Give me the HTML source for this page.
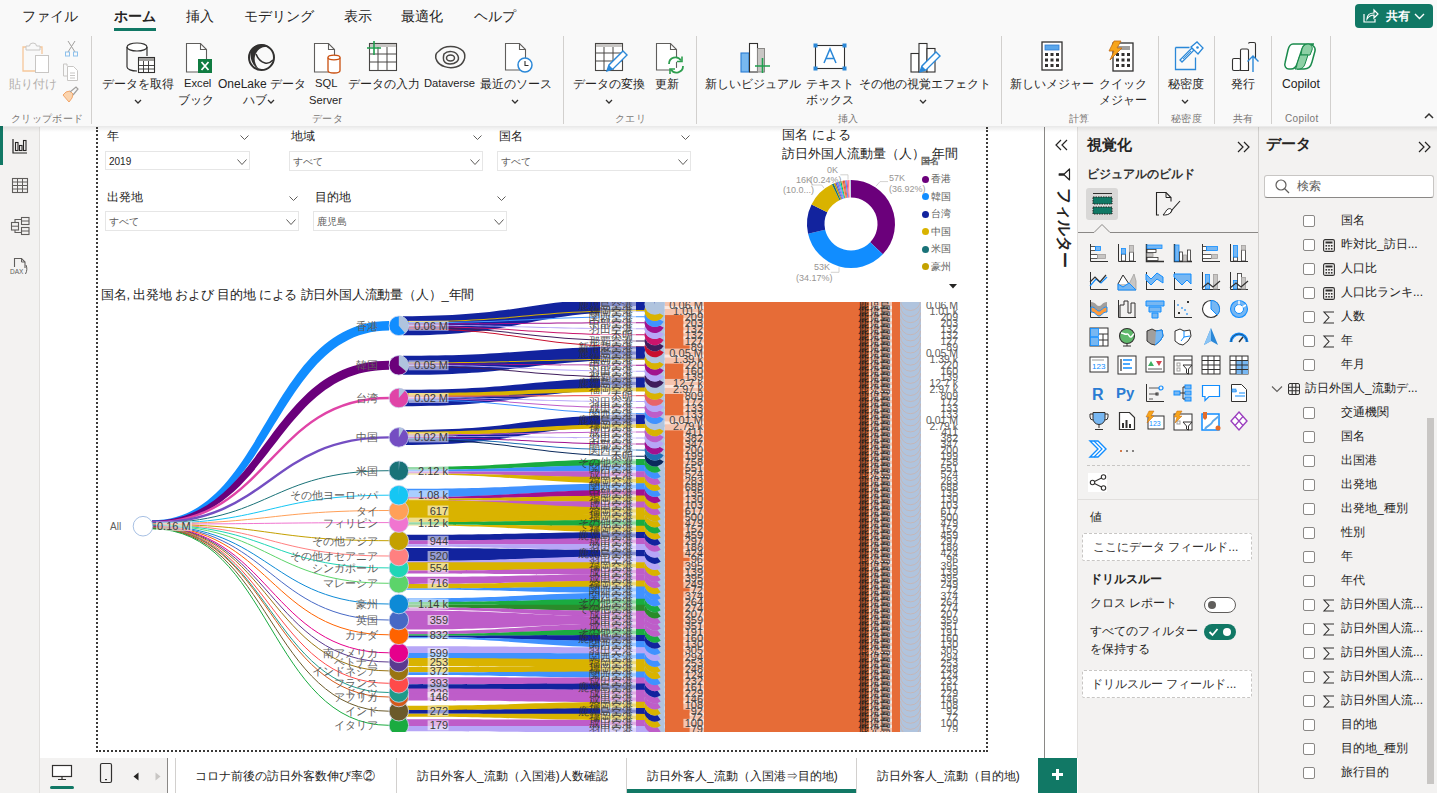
<!DOCTYPE html>
<html><head><meta charset="utf-8">
<style>
*{box-sizing:border-box}
body{margin:0;width:1437px;height:793px;position:relative;overflow:hidden;background:#fff;font-family:"Liberation Sans",sans-serif;color:#252423}
.a{position:absolute}
.t{position:absolute;white-space:nowrap;line-height:1}
.rb{font-size:12px;color:#252423}
.gl{font-size:10px;letter-spacing:.35px;color:#797775}
.sep{position:absolute;width:1px;background:#d2d0ce;top:36px;height:88px}
svg{position:absolute;overflow:visible}
</style></head><body>

<!-- ================= RIBBON ================= -->
<div class="a" style="left:0;top:0;width:1437px;height:126px;background:#f9f9f9"></div>
<div class="t" style="left:22px;top:9px;font-size:14px">ファイル</div>
<div class="t" style="left:114px;top:9px;font-size:14px;font-weight:bold">ホーム</div>
<div class="a" style="left:114px;top:28px;width:42px;height:3px;background:#117865"></div>
<div class="t" style="left:186px;top:9px;font-size:14px">挿入</div>
<div class="t" style="left:244px;top:9px;font-size:14px">モデリング</div>
<div class="t" style="left:344px;top:9px;font-size:14px">表示</div>
<div class="t" style="left:401px;top:9px;font-size:14px">最適化</div>
<div class="t" style="left:474px;top:9px;font-size:14px">ヘルプ</div>

<!-- share button -->
<div class="a" style="left:1355px;top:4px;width:78px;height:24px;background:#117865;border-radius:4px"></div>
<svg style="left:1363px;top:9px" width="16" height="14" viewBox="0 0 16 14"><path d="M1 5v8h11v-3" fill="none" stroke="#fff" stroke-width="1.2"/><path d="M4 10c0-4 3-6 7-6V1l4 4-4 4V6c-3 0-5 1-7 4z" fill="none" stroke="#fff" stroke-width="1.2"/></svg>
<div class="t" style="left:1386px;top:10px;font-size:12.4px;color:#fff;font-weight:bold">共有</div>
<svg style="left:1414px;top:13px" width="11" height="7" viewBox="0 0 11 7"><path d="M1 1l4.5 4.5 4.5-4.5" fill="none" stroke="#fff" stroke-width="1.4"/></svg>

<!-- paste -->
<svg style="left:21px;top:41px" width="30" height="32" viewBox="0 0 30 32">
<path d="M7 6H2v24h15" fill="none" stroke="#f6c79a" stroke-width="1.3"/><path d="M16 6h5v7" fill="none" stroke="#f6c79a" stroke-width="1.3"/>
<path d="M5 9V5h3.5a3.5 3 0 0 1 7 0H19v4z" fill="#f9f9f9" stroke="#c8c6c4" stroke-width="1"/>
<rect x="14.5" y="14.5" width="13" height="17" fill="#fff" stroke="#c8c6c4" stroke-width="1"/></svg>
<svg style="left:65px;top:40px" width="13" height="17" viewBox="0 0 13 17">
<path d="M3 1l7 11M10 1L3 12" stroke="#a19f9d" stroke-width="1" fill="none"/><rect x="0.5" y="12" width="4" height="4" fill="none" stroke="#8ec1ec"/><rect x="8.5" y="12" width="4" height="4" fill="none" stroke="#8ec1ec"/></svg>
<svg style="left:62px;top:63px" width="18" height="18" viewBox="0 0 18 18">
<path d="M5 3V1H1.5v12H5" fill="none" stroke="#c8c6c4"/><path d="M5.5 3.5h6l4 4v10h-10z" fill="#fff" stroke="#c8c6c4"/><path d="M8 10h5M8 12.5h5M8 15h5" stroke="#c8c6c4"/></svg>
<svg style="left:62px;top:86px" width="18" height="18" viewBox="0 0 18 18">
<path d="M1 9l6 7 3-4 1-4-3-3-4 1z" fill="#fbd4ae" stroke="#f1a56a"/><path d="M8 6l6-5 2 2-5 6" fill="none" stroke="#a19f9d" stroke-width="1.2"/></svg>
<div class="t rb" style="left:9px;top:78px;color:#b3b0ad">貼り付け</div>
<div class="t gl" style="left:11px;top:114px">クリップボード</div>
<div class="sep" style="left:91px"></div>

<!-- get data -->
<svg style="left:126px;top:42px" width="30" height="32" viewBox="0 0 30 32">
<ellipse cx="11" cy="5" rx="10" ry="4" fill="#fff" stroke="#323130" stroke-width="1.2"/>
<path d="M1 5v20c0 2.2 4.5 4 10 4" fill="none" stroke="#323130" stroke-width="1.2"/><path d="M21 5v9" fill="none" stroke="#323130" stroke-width="1.2"/>
<rect x="12.5" y="15.5" width="16" height="15" fill="#fff" stroke="#323130" stroke-width="1.1"/><rect x="13" y="16" width="15" height="3" fill="#a19f9d"/>
<path d="M12.5 23.5h16M12.5 27h16M17.5 19v12M22.5 19v12" stroke="#323130" stroke-width="0.9"/></svg>
<div class="t rb" style="left:102px;top:78px">データを取得</div>
<svg style="left:134px;top:99px" width="8" height="6" viewBox="0 0 8 6"><path d="M1 1l3 3 3-3" fill="none" stroke="#323130" stroke-width="1.3"/></svg>

<!-- excel -->
<svg style="left:185px;top:42px" width="30" height="32" viewBox="0 0 30 32">
<path d="M1.5 1.5h14l6 6V30h-20z" fill="#fff" stroke="#605e5c" stroke-width="1.1"/><path d="M15.5 1.5v6h6" fill="none" stroke="#605e5c" stroke-width="1.1"/>
<rect x="13" y="17" width="14" height="14" fill="#107c41"/><path d="M16.5 20l7 8M23.5 20l-7 8" stroke="#fff" stroke-width="1.8"/></svg>
<div class="t rb" style="left:184px;top:78px;font-size:11.2px">Excel</div>
<div class="t rb" style="left:178px;top:94px">ブック</div>

<!-- onelake -->
<svg style="left:247px;top:42px" width="30" height="31" viewBox="0 0 30 31">
<circle cx="14.5" cy="15.5" r="12.5" fill="none" stroke="#323130" stroke-width="2"/>
<path d="M4 8c4-6 13-8 18-3-6-1-12 2-14 9-1 4 0 9 4 13C5 24 2 15 4 8z" fill="#323130"/>
<path d="M9 12c2 5 5 8 9 9 3 1 6-1 8-3" fill="none" stroke="#323130" stroke-width="1.6"/></svg>
<div class="t rb" style="left:218px;top:78px">OneLake データ</div>
<div class="t rb" style="left:243px;top:94px">ハブ</div>
<svg style="left:267px;top:99px" width="8" height="6" viewBox="0 0 8 6"><path d="M1 1l3 3 3-3" fill="none" stroke="#323130" stroke-width="1.3"/></svg>

<!-- sql -->
<svg style="left:313px;top:42px" width="30" height="32" viewBox="0 0 30 32">
<path d="M1.5 1.5h14l6 6V30h-20z" fill="#fff" stroke="#605e5c" stroke-width="1.1"/><path d="M15.5 1.5v6h6" fill="none" stroke="#605e5c" stroke-width="1.1"/>
<path d="M15 15.5v13c0 1.4 2.7 2.5 6 2.5s6-1.1 6-2.5v-13" fill="#fff" stroke="#ca5010" stroke-width="1.3"/><ellipse cx="21" cy="15.5" rx="6" ry="2.3" fill="#fff" stroke="#ca5010" stroke-width="1.3"/></svg>
<div class="t rb" style="left:315px;top:78px;font-size:11.2px">SQL</div>
<div class="t rb" style="left:309px;top:95px;font-size:11.2px">Server</div>

<!-- enter data -->
<svg style="left:366px;top:40px" width="32" height="32" viewBox="0 0 32 32">
<rect x="3.5" y="3.5" width="27" height="27" fill="#fff" stroke="#484644" stroke-width="1.1"/><rect x="4" y="4" width="26" height="3" fill="#c8c6c4"/>
<path d="M3.5 14h27M3.5 22h27M12 7v23M21 7v23" stroke="#484644" stroke-width="1"/>
<path d="M1 8h14M8 1v14" stroke="#1e9e4e" stroke-width="1.6"/></svg>
<div class="t rb" style="left:348px;top:78px">データの入力</div>

<!-- dataverse -->
<svg style="left:434px;top:45px" width="32" height="25" viewBox="0 0 32 25">
<path d="M5 6c5-6 18-6 24 0 4 5 1 14-7 16-8 2-16-1-19-6C0 11 2 8 5 6z" fill="none" stroke="#484644" stroke-width="1.5"/>
<path d="M10 9c4-4 12-3 14 2 2 5-3 8-8 8-5 0-8-3-6-10z" fill="none" stroke="#484644" stroke-width="1.5"/>
<ellipse cx="16.5" cy="13" rx="4" ry="3" fill="none" stroke="#484644" stroke-width="1.5"/></svg>
<div class="t rb" style="left:424px;top:78px;font-size:11.2px">Dataverse</div>

<!-- recent -->
<svg style="left:504px;top:42px" width="30" height="32" viewBox="0 0 30 32">
<path d="M1.5 1.5h14l6 6V28h-20z" fill="#fff" stroke="#605e5c" stroke-width="1.1"/><path d="M15.5 1.5v6h6" fill="none" stroke="#605e5c" stroke-width="1.1"/>
<circle cx="21" cy="23" r="7" fill="#fff" stroke="#2b88d8" stroke-width="1.5"/><path d="M21 19v4.5h3.5" fill="none" stroke="#323130" stroke-width="1.1"/></svg>
<div class="t rb" style="left:480px;top:78px">最近のソース</div>
<svg style="left:511px;top:99px" width="8" height="6" viewBox="0 0 8 6"><path d="M1 1l3 3 3-3" fill="none" stroke="#323130" stroke-width="1.3"/></svg>
<div class="t gl" style="left:312px;top:114px">データ</div>
<div class="sep" style="left:563px"></div>

<!-- transform -->
<svg style="left:594px;top:42px" width="34" height="32" viewBox="0 0 34 32">
<rect x="1.5" y="1.5" width="27" height="27" fill="#fff" stroke="#484644" stroke-width="1.1"/><rect x="2" y="2" width="26" height="3" fill="#c8c6c4"/>
<path d="M1.5 11h27M1.5 19h27M10 5v24M19 5v24" stroke="#484644" stroke-width="1"/>
<path d="M13 29l2-6 14-14 4 4-14 14z" fill="#fff" stroke="#2b88d8" stroke-width="1.4"/><path d="M13 29l2-6 4 4z" fill="#2b88d8"/></svg>
<div class="t rb" style="left:573px;top:78px">データの変換</div>
<svg style="left:605px;top:99px" width="8" height="6" viewBox="0 0 8 6"><path d="M1 1l3 3 3-3" fill="none" stroke="#323130" stroke-width="1.3"/></svg>

<!-- refresh -->
<svg style="left:655px;top:42px" width="30" height="32" viewBox="0 0 30 32">
<path d="M1.5 1.5h14l6 6V28h-20z" fill="#fff" stroke="#605e5c" stroke-width="1.1"/><path d="M15.5 1.5v6h6" fill="none" stroke="#605e5c" stroke-width="1.1"/>
<path d="M14 22a6.5 6.5 0 0 1 12-3.5M28 24a6.5 6.5 0 0 1-12 3.5" fill="#fff" stroke="#2e9e4f" stroke-width="1.8"/>
<path d="M27 14.5v5h-5M15 32v-5h5" fill="none" stroke="#2e9e4f" stroke-width="1.6"/></svg>
<div class="t rb" style="left:655px;top:78px">更新</div>
<div class="t gl" style="left:615px;top:114px">クエリ</div>
<div class="sep" style="left:696px"></div>

<!-- new visual -->
<svg style="left:740px;top:42px" width="32" height="32" viewBox="0 0 32 32">
<rect x="1" y="11" width="8" height="19" fill="#78b8f0" stroke="#2b7cd3" stroke-width="1.1"/>
<rect x="9.5" y="1.5" width="8" height="28.5" fill="#fff" stroke="#323130" stroke-width="1.1"/>
<rect x="17.5" y="6.5" width="7" height="23.5" fill="#c8c6c4" stroke="#8a8886" stroke-width="1"/>
<path d="M15 24h15M22.5 16v15" stroke="#1e9e4e" stroke-width="1.6"/></svg>
<div class="t rb" style="left:705px;top:78px">新しいビジュアル</div>

<!-- text box -->
<svg style="left:813px;top:43px" width="34" height="28" viewBox="0 0 34 28">
<rect x="2.5" y="2.5" width="29" height="23" fill="#fff" stroke="#323130" stroke-width="1.1"/>
<rect x="0.5" y="0.5" width="4" height="4" fill="#2b88d8"/><rect x="29.5" y="0.5" width="4" height="4" fill="#2b88d8"/><rect x="0.5" y="23.5" width="4" height="4" fill="#2b88d8"/><rect x="29.5" y="23.5" width="4" height="4" fill="#2b88d8"/>
<path d="M11 20l6-14 6 14M13 15.5h8" fill="none" stroke="#2b88d8" stroke-width="1.5"/></svg>
<div class="t rb" style="left:806px;top:78px">テキスト</div>
<div class="t rb" style="left:806px;top:94px">ボックス</div>

<!-- other visuals -->
<svg style="left:910px;top:42px" width="32" height="32" viewBox="0 0 32 32">
<rect x="1" y="11.5" width="8" height="18.5" fill="#fff" stroke="#323130" stroke-width="1.1"/>
<rect x="9" y="1.5" width="8" height="28.5" fill="#fff" stroke="#323130" stroke-width="1.1"/>
<rect x="17" y="6.5" width="8" height="23.5" fill="#fff" stroke="#323130" stroke-width="1.1"/>
<path d="M10 30l2-6 14-14 4 4-14 14z" fill="#fff" stroke="#2b88d8" stroke-width="1.4"/><path d="M10 30l2-6 4 4z" fill="#2b88d8"/></svg>
<div class="t rb" style="left:859px;top:78px">その他の視覚エフェクト</div>
<svg style="left:919px;top:99px" width="8" height="6" viewBox="0 0 8 6"><path d="M1 1l3 3 3-3" fill="none" stroke="#323130" stroke-width="1.3"/></svg>
<div class="t gl" style="left:838px;top:114px">挿入</div>
<div class="sep" style="left:1001px"></div>

<!-- new measure -->
<svg style="left:1041px;top:41px" width="22" height="30" viewBox="0 0 22 30">
<rect x="1" y="1" width="20" height="28" fill="#fff" stroke="#323130" stroke-width="1.3"/><rect x="4" y="4" width="14" height="5" fill="#5aa6ea" stroke="#2b7cd3" stroke-width="0.8"/>
<g fill="#323130"><rect x="4" y="12" width="3" height="3"/><rect x="9.5" y="12" width="3" height="3"/><rect x="15" y="12" width="3" height="3"/><rect x="4" y="17.5" width="3" height="3"/><rect x="9.5" y="17.5" width="3" height="3"/><rect x="15" y="17.5" width="3" height="3"/><rect x="4" y="23" width="3" height="3"/><rect x="9.5" y="23" width="3" height="3"/><rect x="15" y="23" width="3" height="3"/></g></svg>
<div class="t rb" style="left:1010px;top:78px">新しいメジャー</div>

<!-- quick measure -->
<svg style="left:1106px;top:40px" width="28" height="32" viewBox="0 0 28 32">
<rect x="7" y="3" width="20" height="28" fill="#fff" stroke="#323130" stroke-width="1.3"/><rect x="10" y="6" width="14" height="4" fill="#a19f9d"/>
<g fill="#323130"><rect x="10" y="13" width="3" height="3"/><rect x="15.5" y="13" width="3" height="3"/><rect x="21" y="13" width="3" height="3"/><rect x="10" y="18.5" width="3" height="3"/><rect x="15.5" y="18.5" width="3" height="3"/><rect x="21" y="18.5" width="3" height="3"/><rect x="10" y="24" width="3" height="3"/><rect x="15.5" y="24" width="3" height="3"/><rect x="21" y="24" width="3" height="3"/></g>
<path d="M8 1h7l-4 7h5L4 20l4-9H3z" fill="#f7a51c" stroke="#c46a10" stroke-width="0.8"/></svg>
<div class="t rb" style="left:1099px;top:78px">クイック</div>
<div class="t rb" style="left:1099px;top:94px">メジャー</div>
<div class="t gl" style="left:1069px;top:114px">計算</div>
<div class="sep" style="left:1158px"></div>

<!-- sensitivity -->
<svg style="left:1174px;top:41px" width="30" height="30" viewBox="0 0 30 30">
<path d="M1.5 6.5h14M1.5 6.5v22h20v-12" fill="none" stroke="#2b88d8" stroke-width="1.3"/>
<path d="M8 21l-2-2 12-12 2 2z" fill="#fff" stroke="#2b88d8" stroke-width="1.3"/><path d="M9 18l8-8" stroke="#2b88d8" stroke-width="0.9"/>
<path d="M17 6l6-5 6 6-5 6z" fill="#fff" stroke="#2b88d8" stroke-width="1.3"/><circle cx="23.5" cy="6.5" r="1.3" fill="#2b88d8"/></svg>
<div class="t rb" style="left:1168px;top:78px">秘密度</div>
<svg style="left:1181px;top:99px" width="8" height="6" viewBox="0 0 8 6"><path d="M1 1l3 3 3-3" fill="none" stroke="#323130" stroke-width="1.3"/></svg>
<div class="t gl" style="left:1171px;top:114px">秘密度</div>
<div class="sep" style="left:1214px"></div>

<!-- publish -->
<svg style="left:1231px;top:42px" width="30" height="31" viewBox="0 0 30 31">
<rect x="1.5" y="16.5" width="8" height="12" rx="1.5" fill="#fff" stroke="#323130" stroke-width="1.1"/>
<path d="M9.5 28.5V8.5a1.5 1.5 0 0 1 1.5-1.5h5a1.5 1.5 0 0 1 1.5 1.5v20z" fill="#fff" stroke="#323130" stroke-width="1.1"/>
<path d="M17.5 1.5a1.5 1.5 0 0 1 1.5-1h4a1.5 1.5 0 0 1 1.5 1.5v15" fill="none" stroke="#323130" stroke-width="1.1"/>
<path d="M22 30V14M16.5 19.5l5.5-5.5 5.5 5.5" fill="none" stroke="#2b88d8" stroke-width="1.4"/></svg>
<div class="t rb" style="left:1231px;top:78px">発行</div>
<div class="t gl" style="left:1233px;top:114px">共有</div>
<div class="sep" style="left:1271px"></div>

<!-- copilot -->
<svg style="left:1284px;top:42px" width="34" height="29" viewBox="0 0 34 29">
<path d="M9 2h15c-3 0-5 2-6 5l-5 15c-1 3-3 5-6 5H5c-3 0-5-3-4-6L4 8c1-4 3-6 5-6z" fill="#fff" stroke="#1a8a4c" stroke-width="1.5"/>
<path d="M24 2c4 0 8 3 7 7l-3 11c-1 4-4 7-8 7h-7c3 0 5-2 6-5l5-15c1-3 3-5 6-5z" fill="#fff" stroke="#1a8a4c" stroke-width="1.5"/>
<path d="M18 7c1-3 3-5 6-5 3 0 5 3 4 6l-2 5h-9z" fill="#8dd0a5" stroke="#1a8a4c" stroke-width="1"/>
<path d="M13 22l3-9h8l-3 9c-1 3-3 5-6 5h-4c1 0 2-3 2-5z" fill="#8dd0a5" stroke="#1a8a4c" stroke-width="1"/></svg>
<div class="t rb" style="left:1282px;top:78px;font-size:12.2px">Copilot</div>
<div class="t gl" style="left:1285px;top:114px">Copilot</div>
<div class="sep" style="left:1330px"></div>
<svg style="left:1424px;top:112px" width="10" height="7" viewBox="0 0 10 7"><path d="M1 6l4-4 4 4" fill="none" stroke="#323130" stroke-width="1.5"/></svg>


<!-- ================= LEFT RAIL ================= -->
<div class="a" style="left:0;top:127px;width:40px;height:666px;background:#f3f2f1;border-right:1px solid #e1dfdd"></div>
<div class="a" style="left:0;top:126px;width:3px;height:39px;background:#117865"></div>
<svg style="left:12px;top:138px" width="16" height="16" viewBox="0 0 16 16">
<path d="M1 1v14h14" fill="none" stroke="#252423" stroke-width="1.2"/><rect x="3.5" y="4.5" width="2.5" height="8" fill="none" stroke="#252423" stroke-width="1.1"/><rect x="7.5" y="7.5" width="2.5" height="5" fill="none" stroke="#252423" stroke-width="1.1"/><rect x="11.5" y="2.5" width="2.5" height="10" fill="none" stroke="#252423" stroke-width="1.1"/></svg>
<svg style="left:11px;top:177px" width="18" height="17" viewBox="0 0 18 17">
<rect x="1.5" y="1.5" width="15" height="14" fill="none" stroke="#605e5c" stroke-width="1.1"/><path d="M1.5 5h15M1.5 8.5h15M1.5 12h15M6.5 1.5v14M11.5 1.5v14" stroke="#605e5c" stroke-width="1"/></svg>
<svg style="left:10px;top:216px" width="20" height="20" viewBox="0 0 20 20">
<rect x="1.5" y="6.5" width="7" height="7.5" fill="none" stroke="#605e5c" stroke-width="1.1"/><path d="M1.5 10.2h7" stroke="#605e5c" stroke-width="1"/>
<rect x="11.5" y="1.5" width="7.5" height="7" fill="none" stroke="#605e5c" stroke-width="1.1"/><path d="M11.5 5h7.5" stroke="#605e5c" stroke-width="1"/>
<rect x="11.5" y="11.5" width="7.5" height="7" fill="none" stroke="#605e5c" stroke-width="1.1"/><path d="M11.5 15h7.5" stroke="#605e5c" stroke-width="1"/>
<path d="M5 6.5V3.5h6.5M5 14v2.5h6.5" fill="none" stroke="#605e5c" stroke-width="1.1"/></svg>
<svg style="left:9px;top:257px" width="20" height="19" viewBox="0 0 20 19">
<path d="M5.5 10V1.5h7l3.5 3.5v6" fill="none" stroke="#605e5c" stroke-width="1.1"/><path d="M12.5 1.5V5H16" fill="none" stroke="#605e5c" stroke-width="1"/><path d="M17 8c1.2 2.5 1.2 6-0.5 9" fill="none" stroke="#605e5c" stroke-width="1"/>
<text x="1" y="17" font-size="6.5" font-family="Liberation Sans" fill="#605e5c">DAX</text></svg>


<!-- ================= CANVAS ================= -->
<div class="a" style="left:40px;top:127px;width:1004px;height:631px;background:#fff"></div>
<div class="a" style="left:96px;top:127px;width:892px;height:625px;border-left:2px dotted #3b3a39;border-right:2px dotted #3b3a39;border-bottom:2px dotted #3b3a39"></div>
<!-- CANVAS_CONTENT -->
<div class="t" style="left:107px;top:130px;font-size:12px;color:#252423">年</div>
<svg style="left:240px;top:135px" width="9" height="5" viewBox="0 0 9 5"><path d="M0.5 0.5L4.5 4.5L8.5 0.5" fill="none" stroke="#605e5c" stroke-width="1"/></svg>
<div class="a" style="left:105px;top:151px;width:145px;height:19px;border:1px solid #e6e6e6;background:#fff"></div>
<div class="t" style="left:109px;top:157px;font-size:10px;color:#252423">2019</div>
<svg style="left:237px;top:159px" width="10" height="6" viewBox="0 0 10 6"><path d="M0.5 0.5L5.0 5.5L9.5 0.5" fill="none" stroke="#605e5c" stroke-width="1"/></svg>
<div class="t" style="left:291px;top:130px;font-size:12px;color:#252423">地域</div>
<svg style="left:473px;top:135px" width="9" height="5" viewBox="0 0 9 5"><path d="M0.5 0.5L4.5 4.5L8.5 0.5" fill="none" stroke="#605e5c" stroke-width="1"/></svg>
<div class="a" style="left:289px;top:151px;width:194px;height:20px;border:1px solid #e6e6e6;background:#fff"></div>
<div class="t" style="left:293px;top:157px;font-size:10px;color:#605e5c">すべて</div>
<svg style="left:470px;top:159px" width="10" height="6" viewBox="0 0 10 6"><path d="M0.5 0.5L5.0 5.5L9.5 0.5" fill="none" stroke="#605e5c" stroke-width="1"/></svg>
<div class="t" style="left:499px;top:130px;font-size:12px;color:#252423">国名</div>
<svg style="left:681px;top:135px" width="9" height="5" viewBox="0 0 9 5"><path d="M0.5 0.5L4.5 4.5L8.5 0.5" fill="none" stroke="#605e5c" stroke-width="1"/></svg>
<div class="a" style="left:497px;top:151px;width:194px;height:20px;border:1px solid #e6e6e6;background:#fff"></div>
<div class="t" style="left:501px;top:157px;font-size:10px;color:#605e5c">すべて</div>
<svg style="left:678px;top:159px" width="10" height="6" viewBox="0 0 10 6"><path d="M0.5 0.5L5.0 5.5L9.5 0.5" fill="none" stroke="#605e5c" stroke-width="1"/></svg>
<div class="t" style="left:107px;top:191px;font-size:12px;color:#252423">出発地</div>
<svg style="left:289px;top:196px" width="9" height="5" viewBox="0 0 9 5"><path d="M0.5 0.5L4.5 4.5L8.5 0.5" fill="none" stroke="#605e5c" stroke-width="1"/></svg>
<div class="a" style="left:105px;top:211px;width:194px;height:20px;border:1px solid #e6e6e6;background:#fff"></div>
<div class="t" style="left:109px;top:217px;font-size:10px;color:#605e5c">すべて</div>
<svg style="left:286px;top:219px" width="10" height="6" viewBox="0 0 10 6"><path d="M0.5 0.5L5.0 5.5L9.5 0.5" fill="none" stroke="#605e5c" stroke-width="1"/></svg>
<div class="t" style="left:315px;top:191px;font-size:12px;color:#252423">目的地</div>
<svg style="left:497px;top:196px" width="9" height="5" viewBox="0 0 9 5"><path d="M0.5 0.5L4.5 4.5L8.5 0.5" fill="none" stroke="#605e5c" stroke-width="1"/></svg>
<div class="a" style="left:313px;top:211px;width:194px;height:20px;border:1px solid #e6e6e6;background:#fff"></div>
<div class="t" style="left:317px;top:217px;font-size:10px;color:#605e5c">鹿児島</div>
<svg style="left:494px;top:219px" width="10" height="6" viewBox="0 0 10 6"><path d="M0.5 0.5L5.0 5.5L9.5 0.5" fill="none" stroke="#605e5c" stroke-width="1"/></svg>
<div class="t" style="left:782px;top:128px;font-size:13px;color:#252423">国名 による</div>
<div class="t" style="left:782px;top:147px;font-size:13px;color:#252423">訪日外国人流動量（人）_年間</div>
<div class="t" style="left:921px;top:157px;font-size:9px;font-weight:bold;color:#605e5c">国名</div>
<div class="a" style="left:922px;top:175.8px;width:7px;height:7px;border-radius:50%;background:#6b007b"></div>
<div class="t" style="left:931px;top:174.3px;font-size:10px;color:#605e5c">香港</div>
<div class="a" style="left:922px;top:193.3px;width:7px;height:7px;border-radius:50%;background:#118dff"></div>
<div class="t" style="left:931px;top:191.8px;font-size:10px;color:#605e5c">韓国</div>
<div class="a" style="left:922px;top:210.8px;width:7px;height:7px;border-radius:50%;background:#12239e"></div>
<div class="t" style="left:931px;top:209.3px;font-size:10px;color:#605e5c">台湾</div>
<div class="a" style="left:922px;top:228.3px;width:7px;height:7px;border-radius:50%;background:#d9b300"></div>
<div class="t" style="left:931px;top:226.8px;font-size:10px;color:#605e5c">中国</div>
<div class="a" style="left:922px;top:245.8px;width:7px;height:7px;border-radius:50%;background:#197278"></div>
<div class="t" style="left:931px;top:244.3px;font-size:10px;color:#605e5c">米国</div>
<div class="a" style="left:922px;top:263.3px;width:7px;height:7px;border-radius:50%;background:#c4a200"></div>
<div class="t" style="left:931px;top:261.8px;font-size:10px;color:#605e5c">豪州</div>
<svg style="left:949px;top:284px" width="8" height="5" viewBox="0 0 8 5"><path d="M0 0h8L4 4.5z" fill="#252423"/></svg>
<svg style="left:807px;top:180.1px" width="88" height="88" viewBox="0 0 88 88"><path d="M44.00 0.00A44 44 0 0 1 75.84 74.37L63.18 62.29A26.5 26.5 0 0 0 44.00 17.50z" fill="#6b007b"/><path d="M75.84 74.37A44 44 0 0 1 1.07 53.65L18.15 49.81A26.5 26.5 0 0 0 63.18 62.29z" fill="#118dff"/><path d="M1.07 53.65A44 44 0 0 1 4.57 24.47L20.25 32.24A26.5 26.5 0 0 0 18.15 49.81z" fill="#12239e"/><path d="M4.57 24.47A44 44 0 0 1 24.89 4.37L32.49 20.13A26.5 26.5 0 0 0 20.25 32.24z" fill="#d9b300"/><path d="M24.89 4.37A44 44 0 0 1 26.72 3.54L33.59 19.63A26.5 26.5 0 0 0 32.49 20.13z" fill="#197278"/><path d="M26.72 3.54A44 44 0 0 1 28.29 2.90L34.54 19.25A26.5 26.5 0 0 0 33.59 19.63z" fill="#c4a200"/><path d="M28.29 2.90A44 44 0 0 1 29.53 2.45L35.28 18.98A26.5 26.5 0 0 0 34.54 19.25z" fill="#744ec2"/><path d="M29.53 2.45A44 44 0 0 1 30.84 2.01L36.08 18.71A26.5 26.5 0 0 0 35.28 18.98z" fill="#4092ff"/><path d="M30.84 2.01A44 44 0 0 1 31.95 1.68L36.75 18.51A26.5 26.5 0 0 0 36.08 18.71z" fill="#be5dc9"/><path d="M31.95 1.68A44 44 0 0 1 33.22 1.34L37.51 18.31A26.5 26.5 0 0 0 36.75 18.51z" fill="#15c6f4"/><path d="M33.22 1.34A44 44 0 0 1 34.35 1.07L38.19 18.15A26.5 26.5 0 0 0 37.51 18.31z" fill="#1aab40"/><path d="M34.35 1.07A44 44 0 0 1 35.71 0.79L39.01 17.97A26.5 26.5 0 0 0 38.19 18.15z" fill="#ffa058"/><path d="M35.71 0.79A44 44 0 0 1 36.77 0.60L39.65 17.86A26.5 26.5 0 0 0 39.01 17.97z" fill="#d64550"/><path d="M36.77 0.60A44 44 0 0 1 38.15 0.39L40.48 17.74A26.5 26.5 0 0 0 39.65 17.86z" fill="#e66c37"/><path d="M38.15 0.39A44 44 0 0 1 39.38 0.24L41.21 17.65A26.5 26.5 0 0 0 40.48 17.74z" fill="#4092ff"/><path d="M39.38 0.24A44 44 0 0 1 40.53 0.14L41.91 17.58A26.5 26.5 0 0 0 41.21 17.65z" fill="#e044a7"/><path d="M40.53 0.14A44 44 0 0 1 41.92 0.05L42.74 17.53A26.5 26.5 0 0 0 41.91 17.58z" fill="#ff8080"/><path d="M41.92 0.05A44 44 0 0 1 43.07 0.01L43.44 17.51A26.5 26.5 0 0 0 42.74 17.53z" fill="#ffc0cb"/><path d="M43.07 0.01A44 44 0 0 1 44.00 0.00L44.00 17.50A26.5 26.5 0 0 0 43.44 17.51z" fill="#b0c4de"/></svg>
<div class="t" style="left:889px;top:174px;font-size:9px;color:#979593">57K</div>
<div class="t" style="left:889px;top:185px;font-size:9px;color:#979593">(36.92%)</div>
<div class="t" style="left:827px;top:166px;font-size:9px;color:#979593">0K</div>
<div class="t" style="left:810px;top:176px;font-size:9px;color:#979593">(0.24%)</div>
<div class="t" style="left:796px;top:176px;font-size:9px;color:#979593">16K</div>
<div class="t" style="left:783px;top:186px;font-size:9px;color:#979593">(10.0...)</div>
<div class="t" style="left:814px;top:263px;font-size:9px;color:#979593">53K</div>
<div class="t" style="left:796px;top:274px;font-size:9px;color:#979593">(34.17%)</div>
<svg style="left:780px;top:160px" width="120" height="120" viewBox="780 160 120 120"><path d="M876 186.2L880 181.6H888M840.3 174.8H848V179.7M811 185H821.8L824 188.2M830.8 272.3H839V267.4" fill="none" stroke="#c8c6c4" stroke-width="0.8"/></svg>
<div class="t" style="left:101px;top:288px;font-size:13px;letter-spacing:-0.2px;color:#252423">国名, 出発地 および 目的地 による 訪日外国人流動量（人）_年間</div>
<svg style="left:100px;top:302px;overflow:hidden" width="885" height="430" viewBox="100 302 885 430" font-family="Liberation Sans, sans-serif"><path d="M152 520.30C266.2 520.30 266.2 321.05 389 321.05L389 330.55C273.8 330.55 273.8 523.30 152 523.30z" fill="#118dff"/>
<path d="M152 520.62C266.4 520.62 266.4 360.80 389 360.80L389 369.80C273.6 369.80 273.6 523.62 152 523.62z" fill="#6b007b"/>
<path d="M152 522.44C270 522.44 270 398.00 389 398.00" fill="none" stroke="#e044a7" stroke-width="2.4"/>
<path d="M152 522.75C270 522.75 270 437.40 389 437.40" fill="none" stroke="#744ec2" stroke-width="2.4"/>
<path d="M152 523.07C270 523.07 270 470.70 389 470.70" fill="none" stroke="#197278" stroke-width="1.0"/>
<path d="M152 523.39C270 523.39 270 495.20 389 495.20" fill="none" stroke="#15c6f4" stroke-width="1.0"/>
<path d="M152 523.71C270 523.71 270 510.50 389 510.50" fill="none" stroke="#ffa058" stroke-width="1.0"/>
<path d="M152 524.03C270 524.03 270 522.60 389 522.60" fill="none" stroke="#f075d0" stroke-width="1.0"/>
<path d="M152 524.35C270 524.35 270 540.70 389 540.70" fill="none" stroke="#c4a000" stroke-width="1.0"/>
<path d="M152 524.66C270 524.66 270 556.00 389 556.00" fill="none" stroke="#ff8080" stroke-width="1.0"/>
<path d="M152 524.98C270 524.98 270 567.90 389 567.90" fill="none" stroke="#1fd6b6" stroke-width="1.0"/>
<path d="M152 525.30C270 525.30 270 583.30 389 583.30" fill="none" stroke="#5cd46a" stroke-width="1.0"/>
<path d="M152 525.62C270 525.62 270 604.00 389 604.00" fill="none" stroke="#0d8ad6" stroke-width="1.0"/>
<path d="M152 525.94C270 525.94 270 620.00 389 620.00" fill="none" stroke="#4668c5" stroke-width="1.0"/>
<path d="M152 526.25C270 526.25 270 634.80 389 634.80" fill="none" stroke="#ff6300" stroke-width="1.0"/>
<path d="M152 526.57C270 526.57 270 652.80 389 652.80" fill="none" stroke="#e6008c" stroke-width="1.0"/>
<path d="M152 526.89C270 526.89 270 662.00 389 662.00" fill="none" stroke="#5b3a8f" stroke-width="1.0"/>
<path d="M152 527.21C270 527.21 270 670.90 389 670.90" fill="none" stroke="#9a7412" stroke-width="1.0"/>
<path d="M152 527.53C270 527.53 270 683.30 389 683.30" fill="none" stroke="#ff4a4a" stroke-width="1.0"/>
<path d="M152 527.85C270 527.85 270 692.50 389 692.50" fill="none" stroke="#1f9a8a" stroke-width="1.0"/>
<path d="M152 528.16C270 528.16 270 697.00 389 697.00" fill="none" stroke="#d4591a" stroke-width="1.0"/>
<path d="M152 528.48C270 528.48 270 711.20 389 711.20" fill="none" stroke="#6b5a2a" stroke-width="1.0"/>
<path d="M152 528.80C270 528.80 270 725.30 389 725.30" fill="none" stroke="#1aab40" stroke-width="1.0"/>
<path d="M403.0 316.30C525.5 316.30 525.5 297.85 648.0 297.85L648.0 311.15C525.5 311.15 525.5 335.30 403.0 335.30z" fill="#12239e"/>
<path d="M403.0 321.10C525.5 321.10 525.5 310.07 648.0 310.07L648.0 311.07C525.5 311.07 525.5 322.10 403.0 322.10z" fill="#d9b300"/>
<path d="M403.0 322.30C525.5 322.30 525.5 316.14 648.0 316.14L648.0 317.14C525.5 317.14 525.5 323.30 403.0 323.30z" fill="#4092ff"/>
<path d="M403.0 323.50C525.5 323.50 525.5 322.21 648.0 322.21L648.0 323.21C525.5 323.21 525.5 324.50 403.0 324.50z" fill="#a1118f"/>
<path d="M403.0 324.70C525.5 324.70 525.5 328.28 648.0 328.28L648.0 329.28C525.5 329.28 525.5 325.70 403.0 325.70z" fill="#b7a6f7"/>
<path d="M403.0 325.90C525.5 325.90 525.5 334.35 648.0 334.35L648.0 335.35C525.5 335.35 525.5 326.90 403.0 326.90z" fill="#c9146c"/>
<path d="M403.0 327.10C525.5 327.10 525.5 340.42 648.0 340.42L648.0 341.42C525.5 341.42 525.5 328.10 403.0 328.10z" fill="#3f1d5c"/>
<path d="M403.0 328.30C525.5 328.30 525.5 346.49 648.0 346.49L648.0 347.49C525.5 347.49 525.5 329.30 403.0 329.30z" fill="#c8102e"/>
<path d="M403.0 355.80C525.5 355.80 525.5 346.41 648.0 346.41L648.0 359.71C525.5 359.71 525.5 374.80 403.0 374.80z" fill="#12239e"/>
<path d="M403.0 362.40C525.5 362.40 525.5 358.63 648.0 358.63L648.0 359.63C525.5 359.63 525.5 363.40 403.0 363.40z" fill="#d9b300"/>
<path d="M403.0 363.60C525.5 363.60 525.5 364.70 648.0 364.70L648.0 365.70C525.5 365.70 525.5 364.60 403.0 364.60z" fill="#a1118f"/>
<path d="M403.0 364.80C525.5 364.80 525.5 370.77 648.0 370.77L648.0 371.77C525.5 371.77 525.5 365.80 403.0 365.80z" fill="#b7a6f7"/>
<path d="M403.0 366.00C525.5 366.00 525.5 376.84 648.0 376.84L648.0 377.84C525.5 377.84 525.5 367.00 403.0 367.00z" fill="#3f1d5c"/>
<path d="M403.0 389.75C525.5 389.75 525.5 377.63 648.0 377.63L648.0 389.18C525.5 389.18 525.5 406.25 403.0 406.25z" fill="#12239e"/>
<path d="M403.0 393.00C525.5 393.00 525.5 387.48 648.0 387.48L648.0 391.48C525.5 391.48 525.5 397.00 403.0 397.00z" fill="#d9b300"/>
<path d="M403.0 395.61C525.5 395.61 525.5 394.96 648.0 394.96L648.0 396.14C525.5 396.14 525.5 396.79 403.0 396.79z" fill="#e8636a"/>
<path d="M403.0 396.90C525.5 396.90 525.5 401.12 648.0 401.12L648.0 402.12C525.5 402.12 525.5 397.90 403.0 397.90z" fill="#b7a6f7"/>
<path d="M403.0 398.10C525.5 398.10 525.5 407.19 648.0 407.19L648.0 408.19C525.5 408.19 525.5 399.10 403.0 399.10z" fill="#be5dc9"/>
<path d="M403.0 399.30C525.5 399.30 525.5 413.26 648.0 413.26L648.0 414.26C525.5 414.26 525.5 400.30 403.0 400.30z" fill="#4092ff"/>
<path d="M403.0 429.90C525.5 429.90 525.5 414.58 648.0 414.58L648.0 425.08C525.5 425.08 525.5 444.90 403.0 444.90z" fill="#12239e"/>
<path d="M403.0 431.80C525.5 431.80 525.5 423.90 648.0 423.90L648.0 427.90C525.5 427.90 525.5 435.80 403.0 435.80z" fill="#d9b300"/>
<path d="M403.0 434.50C525.5 434.50 525.5 431.47 648.0 431.47L648.0 432.47C525.5 432.47 525.5 435.50 403.0 435.50z" fill="#be5dc9"/>
<path d="M403.0 435.70C525.5 435.70 525.5 437.54 648.0 437.54L648.0 438.54C525.5 438.54 525.5 436.70 403.0 436.70z" fill="#b7a6f7"/>
<path d="M403.0 436.90C525.5 436.90 525.5 443.61 648.0 443.61L648.0 444.61C525.5 444.61 525.5 437.90 403.0 437.90z" fill="#a1118f"/>
<path d="M403.0 438.10C525.5 438.10 525.5 449.68 648.0 449.68L648.0 450.68C525.5 450.68 525.5 439.10 403.0 439.10z" fill="#1f6fb4"/>
<path d="M403.0 439.30C525.5 439.30 525.5 455.75 648.0 455.75L648.0 456.75C525.5 456.75 525.5 440.30 403.0 440.30z" fill="#0b2a5c"/>
<path d="M403.0 466.95C525.5 466.95 525.5 459.03 648.0 459.03L648.0 465.61C525.5 465.61 525.5 469.64 403.0 469.64z" fill="#1aab40"/>
<path d="M403.0 469.64C525.5 469.64 525.5 465.10 648.0 465.10L648.0 471.68C525.5 471.68 525.5 471.59 403.0 471.59z" fill="#4092ff"/>
<path d="M403.0 471.59C525.5 471.59 525.5 471.17 648.0 471.17L648.0 477.75C525.5 477.75 525.5 473.45 403.0 473.45z" fill="#be5dc9"/>
<path d="M403.0 473.45C525.5 473.45 525.5 477.24 648.0 477.24L648.0 483.81C525.5 483.81 525.5 474.45 403.0 474.45z" fill="#d9b300"/>
<path d="M403.0 488.85C525.5 488.85 525.5 483.31 648.0 483.31L648.0 489.89C525.5 489.89 525.5 497.12 403.0 497.12z" fill="#4092ff"/>
<path d="M403.0 497.12C525.5 497.12 525.5 489.38 648.0 489.38L648.0 495.95C525.5 495.95 525.5 498.75 403.0 498.75z" fill="#a1118f"/>
<path d="M403.0 498.75C525.5 498.75 525.5 495.45 648.0 495.45L648.0 502.03C525.5 502.03 525.5 500.31 403.0 500.31z" fill="#d9b300"/>
<path d="M403.0 500.31C525.5 500.31 525.5 501.52 648.0 501.52L648.0 508.09C525.5 508.09 525.5 501.55 403.0 501.55z" fill="#be5dc9"/>
<path d="M403.0 500.00C525.5 500.00 525.5 507.59 648.0 507.59L648.0 514.16C525.5 514.16 525.5 521.00 403.0 521.00z" fill="#d9b300"/>
<path d="M403.0 519.60C525.5 519.60 525.5 513.67 648.0 513.67L648.0 520.24C525.5 520.24 525.5 522.17 403.0 522.17z" fill="#d9b300"/>
<path d="M403.0 522.17C525.5 522.17 525.5 519.74 648.0 519.74L648.0 526.30C525.5 526.30 525.5 524.63 403.0 524.63z" fill="#1aab40"/>
<path d="M403.0 524.63C525.5 524.63 525.5 525.80 648.0 525.80L648.0 532.37C525.5 532.37 525.5 525.60 403.0 525.60z" fill="#d9b300"/>
<path d="M403.0 534.70C525.5 534.70 525.5 531.88 648.0 531.88L648.0 538.44C525.5 538.44 525.5 540.53 403.0 540.53z" fill="#12239e"/>
<path d="M403.0 540.53C525.5 540.53 525.5 537.95 648.0 537.95L648.0 544.51C525.5 544.51 525.5 544.31 403.0 544.31z" fill="#be5dc9"/>
<path d="M403.0 544.31C525.5 544.31 525.5 544.01 648.0 544.01L648.0 550.58C525.5 550.58 525.5 546.70 403.0 546.70z" fill="#b7a6f7"/>
<path d="M403.0 548.00C525.5 548.00 525.5 550.09 648.0 550.09L648.0 556.65C525.5 556.65 525.5 561.05 403.0 561.05z" fill="#12239e"/>
<path d="M403.0 561.05C525.5 561.05 525.5 556.15 648.0 556.15L648.0 562.72C525.5 562.72 525.5 564.00 403.0 564.00z" fill="#b7a6f7"/>
<path d="M403.0 562.40C525.5 562.40 525.5 562.23 648.0 562.23L648.0 568.79C525.5 568.79 525.5 570.54 403.0 570.54z" fill="#d9b300"/>
<path d="M403.0 570.54C525.5 570.54 525.5 568.29 648.0 568.29L648.0 574.86C525.5 574.86 525.5 573.40 403.0 573.40z" fill="#be5dc9"/>
<path d="M403.0 576.80C525.5 576.80 525.5 574.37 648.0 574.37L648.0 580.93C525.5 580.93 525.5 583.97 403.0 583.97z" fill="#be5dc9"/>
<path d="M403.0 583.97C525.5 583.97 525.5 580.44 648.0 580.44L648.0 587.00C525.5 587.00 525.5 588.49 403.0 588.49z" fill="#d9b300"/>
<path d="M403.0 588.49C525.5 588.49 525.5 586.50 648.0 586.50L648.0 593.07C525.5 593.07 525.5 589.80 403.0 589.80z" fill="#4092ff"/>
<path d="M403.0 598.50C525.5 598.50 525.5 592.57 648.0 592.57L648.0 599.14C525.5 599.14 525.5 602.18 403.0 602.18z" fill="#4092ff"/>
<path d="M403.0 602.18C525.5 602.18 525.5 598.64 648.0 598.64L648.0 605.21C525.5 605.21 525.5 604.77 403.0 604.77z" fill="#1aab40"/>
<path d="M403.0 604.77C525.5 604.77 525.5 604.72 648.0 604.72L648.0 611.28C525.5 611.28 525.5 607.47 403.0 607.47z" fill="#2a8c2a"/>
<path d="M403.0 607.47C525.5 607.47 525.5 610.78 648.0 610.78L648.0 617.35C525.5 617.35 525.5 609.50 403.0 609.50z" fill="#be5dc9"/>
<path d="M403.0 610.50C525.5 610.50 525.5 616.86 648.0 616.86L648.0 623.42C525.5 623.42 525.5 629.50 403.0 629.50z" fill="#be5dc9"/>
<path d="M403.0 631.30C525.5 631.30 525.5 622.93 648.0 622.93L648.0 629.50C525.5 629.50 525.5 634.25 403.0 634.25z" fill="#be5dc9"/>
<path d="M403.0 634.25C525.5 634.25 525.5 629.00 648.0 629.00L648.0 635.56C525.5 635.56 525.5 635.86 403.0 635.86z" fill="#1aab40"/>
<path d="M403.0 635.86C525.5 635.86 525.5 635.06 648.0 635.06L648.0 641.63C525.5 641.63 525.5 637.21 403.0 637.21z" fill="#12239e"/>
<path d="M403.0 637.21C525.5 637.21 525.5 641.13 648.0 641.13L648.0 647.70C525.5 647.70 525.5 638.30 403.0 638.30z" fill="#4092ff"/>
<path d="M403.0 646.30C525.5 646.30 525.5 647.21 648.0 647.21L648.0 653.77C525.5 653.77 525.5 652.92 403.0 652.92z" fill="#b7a6f7"/>
<path d="M403.0 652.92C525.5 652.92 525.5 653.27 648.0 653.27L648.0 659.84C525.5 659.84 525.5 659.30 403.0 659.30z" fill="#4092ff"/>
<path d="M403.0 658.00C525.5 658.00 525.5 659.34 648.0 659.34L648.0 665.91C525.5 665.91 525.5 666.00 403.0 666.00z" fill="#d9b300"/>
<path d="M403.0 666.90C525.5 666.90 525.5 665.42 648.0 665.42L648.0 671.99C525.5 671.99 525.5 672.23 403.0 672.23z" fill="#d9b300"/>
<path d="M403.0 672.23C525.5 672.23 525.5 671.49 648.0 671.49L648.0 678.05C525.5 678.05 525.5 674.90 403.0 674.90z" fill="#4092ff"/>
<path d="M403.0 677.30C525.5 677.30 525.5 677.55 648.0 677.55L648.0 684.12C525.5 684.12 525.5 684.38 403.0 684.38z" fill="#be5dc9"/>
<path d="M403.0 684.38C525.5 684.38 525.5 683.62 648.0 683.62L648.0 690.19C525.5 690.19 525.5 689.30 403.0 689.30z" fill="#12239e"/>
<path d="M403.0 688.50C525.5 688.50 525.5 689.70 648.0 689.70L648.0 696.26C525.5 696.26 525.5 696.50 403.0 696.50z" fill="#be5dc9"/>
<path d="M403.0 693.50C525.5 693.50 525.5 695.76 648.0 695.76L648.0 702.33C525.5 702.33 525.5 700.50 403.0 700.50z" fill="#be5dc9"/>
<path d="M403.0 705.70C525.5 705.70 525.5 701.83 648.0 701.83L648.0 708.40C525.5 708.40 525.5 710.07 403.0 710.07z" fill="#d9b300"/>
<path d="M403.0 710.07C525.5 710.07 525.5 707.90 648.0 707.90L648.0 714.47C525.5 714.47 525.5 713.79 403.0 713.79z" fill="#12239e"/>
<path d="M403.0 713.79C525.5 713.79 525.5 713.98 648.0 713.98L648.0 720.54C525.5 720.54 525.5 716.70 403.0 716.70z" fill="#d9b300"/>
<path d="M403.0 719.30C525.5 719.30 525.5 720.04 648.0 720.04L648.0 726.61C525.5 726.61 525.5 726.00 403.0 726.00z" fill="#be5dc9"/>
<path d="M403.0 726.00C525.5 726.00 525.5 726.12 648.0 726.12L648.0 732.68C525.5 732.68 525.5 731.30 403.0 731.30z" fill="#b7a6f7"/>
<rect x="600" y="300.00" width="36" height="9" fill="#fff" fill-opacity="0.5"/>
<rect x="600" y="306.07" width="36" height="9" fill="#fff" fill-opacity="0.5"/>
<rect x="600" y="312.14" width="36" height="9" fill="#fff" fill-opacity="0.5"/>
<rect x="600" y="318.21" width="36" height="9" fill="#fff" fill-opacity="0.5"/>
<rect x="600" y="324.28" width="36" height="9" fill="#fff" fill-opacity="0.5"/>
<rect x="600" y="330.35" width="36" height="9" fill="#fff" fill-opacity="0.5"/>
<rect x="600" y="336.42" width="36" height="9" fill="#fff" fill-opacity="0.5"/>
<rect x="600" y="342.49" width="36" height="9" fill="#fff" fill-opacity="0.5"/>
<rect x="600" y="348.56" width="36" height="9" fill="#fff" fill-opacity="0.5"/>
<rect x="600" y="354.63" width="36" height="9" fill="#fff" fill-opacity="0.5"/>
<rect x="600" y="360.70" width="36" height="9" fill="#fff" fill-opacity="0.5"/>
<rect x="600" y="366.77" width="36" height="9" fill="#fff" fill-opacity="0.5"/>
<rect x="600" y="372.84" width="36" height="9" fill="#fff" fill-opacity="0.5"/>
<rect x="600" y="378.91" width="36" height="9" fill="#fff" fill-opacity="0.5"/>
<rect x="600" y="384.98" width="36" height="9" fill="#fff" fill-opacity="0.5"/>
<rect x="600" y="391.05" width="36" height="9" fill="#fff" fill-opacity="0.5"/>
<rect x="600" y="397.12" width="36" height="9" fill="#fff" fill-opacity="0.5"/>
<rect x="600" y="403.19" width="36" height="9" fill="#fff" fill-opacity="0.5"/>
<rect x="600" y="409.26" width="36" height="9" fill="#fff" fill-opacity="0.5"/>
<rect x="600" y="415.33" width="36" height="9" fill="#fff" fill-opacity="0.5"/>
<rect x="600" y="421.40" width="36" height="9" fill="#fff" fill-opacity="0.5"/>
<rect x="600" y="427.47" width="36" height="9" fill="#fff" fill-opacity="0.5"/>
<rect x="600" y="433.54" width="36" height="9" fill="#fff" fill-opacity="0.5"/>
<rect x="600" y="439.61" width="36" height="9" fill="#fff" fill-opacity="0.5"/>
<rect x="600" y="445.68" width="36" height="9" fill="#fff" fill-opacity="0.5"/>
<rect x="600" y="451.75" width="36" height="9" fill="#fff" fill-opacity="0.5"/>
<rect x="600" y="457.82" width="36" height="9" fill="#fff" fill-opacity="0.5"/>
<rect x="600" y="463.89" width="36" height="9" fill="#fff" fill-opacity="0.5"/>
<rect x="600" y="469.96" width="36" height="9" fill="#fff" fill-opacity="0.5"/>
<rect x="600" y="476.03" width="36" height="9" fill="#fff" fill-opacity="0.5"/>
<rect x="600" y="482.10" width="36" height="9" fill="#fff" fill-opacity="0.5"/>
<rect x="600" y="488.17" width="36" height="9" fill="#fff" fill-opacity="0.5"/>
<rect x="600" y="494.24" width="36" height="9" fill="#fff" fill-opacity="0.5"/>
<rect x="600" y="500.31" width="36" height="9" fill="#fff" fill-opacity="0.5"/>
<rect x="600" y="506.38" width="36" height="9" fill="#fff" fill-opacity="0.5"/>
<rect x="600" y="512.45" width="36" height="9" fill="#fff" fill-opacity="0.5"/>
<rect x="600" y="518.52" width="36" height="9" fill="#fff" fill-opacity="0.5"/>
<rect x="600" y="524.59" width="36" height="9" fill="#fff" fill-opacity="0.5"/>
<rect x="600" y="530.66" width="36" height="9" fill="#fff" fill-opacity="0.5"/>
<rect x="600" y="536.73" width="36" height="9" fill="#fff" fill-opacity="0.5"/>
<rect x="600" y="542.80" width="36" height="9" fill="#fff" fill-opacity="0.5"/>
<rect x="600" y="548.87" width="36" height="9" fill="#fff" fill-opacity="0.5"/>
<rect x="600" y="554.94" width="36" height="9" fill="#fff" fill-opacity="0.5"/>
<rect x="600" y="561.01" width="36" height="9" fill="#fff" fill-opacity="0.5"/>
<rect x="600" y="567.08" width="36" height="9" fill="#fff" fill-opacity="0.5"/>
<rect x="600" y="573.15" width="36" height="9" fill="#fff" fill-opacity="0.5"/>
<rect x="600" y="579.22" width="36" height="9" fill="#fff" fill-opacity="0.5"/>
<rect x="600" y="585.29" width="36" height="9" fill="#fff" fill-opacity="0.5"/>
<rect x="600" y="591.36" width="36" height="9" fill="#fff" fill-opacity="0.5"/>
<rect x="600" y="597.43" width="36" height="9" fill="#fff" fill-opacity="0.5"/>
<rect x="600" y="603.50" width="36" height="9" fill="#fff" fill-opacity="0.5"/>
<rect x="600" y="609.57" width="36" height="9" fill="#fff" fill-opacity="0.5"/>
<rect x="600" y="615.64" width="36" height="9" fill="#fff" fill-opacity="0.5"/>
<rect x="600" y="621.71" width="36" height="9" fill="#fff" fill-opacity="0.5"/>
<rect x="600" y="627.78" width="36" height="9" fill="#fff" fill-opacity="0.5"/>
<rect x="600" y="633.85" width="36" height="9" fill="#fff" fill-opacity="0.5"/>
<rect x="600" y="639.92" width="36" height="9" fill="#fff" fill-opacity="0.5"/>
<rect x="600" y="645.99" width="36" height="9" fill="#fff" fill-opacity="0.5"/>
<rect x="600" y="652.06" width="36" height="9" fill="#fff" fill-opacity="0.5"/>
<rect x="600" y="658.13" width="36" height="9" fill="#fff" fill-opacity="0.5"/>
<rect x="600" y="664.20" width="36" height="9" fill="#fff" fill-opacity="0.5"/>
<rect x="600" y="670.27" width="36" height="9" fill="#fff" fill-opacity="0.5"/>
<rect x="600" y="676.34" width="36" height="9" fill="#fff" fill-opacity="0.5"/>
<rect x="600" y="682.41" width="36" height="9" fill="#fff" fill-opacity="0.5"/>
<rect x="600" y="688.48" width="36" height="9" fill="#fff" fill-opacity="0.5"/>
<rect x="600" y="694.55" width="36" height="9" fill="#fff" fill-opacity="0.5"/>
<rect x="600" y="700.62" width="36" height="9" fill="#fff" fill-opacity="0.5"/>
<rect x="600" y="706.69" width="36" height="9" fill="#fff" fill-opacity="0.5"/>
<rect x="600" y="712.76" width="36" height="9" fill="#fff" fill-opacity="0.5"/>
<rect x="600" y="718.83" width="36" height="9" fill="#fff" fill-opacity="0.5"/>
<rect x="600" y="724.90" width="36" height="9" fill="#fff" fill-opacity="0.5"/>
<text x="633" y="308.50" text-anchor="end" font-size="11" fill="#323130" fill-opacity="0.85">鹿児島空港</text>
<text x="633" y="314.57" text-anchor="end" font-size="11" fill="#323130" fill-opacity="0.85">福岡空港</text>
<text x="633" y="320.64" text-anchor="end" font-size="11" fill="#323130" fill-opacity="0.85">関西空港</text>
<text x="633" y="326.71" text-anchor="end" font-size="11" fill="#323130" fill-opacity="0.85">中部空港</text>
<text x="633" y="332.78" text-anchor="end" font-size="11" fill="#323130" fill-opacity="0.85">羽田空港</text>
<text x="633" y="338.85" text-anchor="end" font-size="11" fill="#323130" fill-opacity="0.85">不明</text>
<text x="633" y="344.92" text-anchor="end" font-size="11" fill="#323130" fill-opacity="0.85">那覇空港</text>
<text x="633" y="350.99" text-anchor="end" font-size="11" fill="#323130" fill-opacity="0.85">新千歳空港</text>
<text x="633" y="357.06" text-anchor="end" font-size="11" fill="#323130" fill-opacity="0.85">鹿児島空港</text>
<text x="633" y="363.13" text-anchor="end" font-size="11" fill="#323130" fill-opacity="0.85">福岡空港</text>
<text x="633" y="369.20" text-anchor="end" font-size="11" fill="#323130" fill-opacity="0.85">中部空港</text>
<text x="633" y="375.27" text-anchor="end" font-size="11" fill="#323130" fill-opacity="0.85">羽田空港</text>
<text x="633" y="381.34" text-anchor="end" font-size="11" fill="#323130" fill-opacity="0.85">那覇空港</text>
<text x="633" y="387.41" text-anchor="end" font-size="11" fill="#323130" fill-opacity="0.85">鹿児島空港</text>
<text x="633" y="393.48" text-anchor="end" font-size="11" fill="#323130" fill-opacity="0.85">福岡空港</text>
<text x="633" y="399.55" text-anchor="end" font-size="11" fill="#323130" fill-opacity="0.85">不明</text>
<text x="633" y="405.62" text-anchor="end" font-size="11" fill="#323130" fill-opacity="0.85">羽田空港</text>
<text x="633" y="411.69" text-anchor="end" font-size="11" fill="#323130" fill-opacity="0.85">成田空港</text>
<text x="633" y="417.76" text-anchor="end" font-size="11" fill="#323130" fill-opacity="0.85">関西空港</text>
<text x="633" y="423.83" text-anchor="end" font-size="11" fill="#323130" fill-opacity="0.85">鹿児島空港</text>
<text x="633" y="429.90" text-anchor="end" font-size="11" fill="#323130" fill-opacity="0.85">福岡空港</text>
<text x="633" y="435.97" text-anchor="end" font-size="11" fill="#323130" fill-opacity="0.85">成田空港</text>
<text x="633" y="442.04" text-anchor="end" font-size="11" fill="#323130" fill-opacity="0.85">羽田空港</text>
<text x="633" y="448.11" text-anchor="end" font-size="11" fill="#323130" fill-opacity="0.85">中部空港</text>
<text x="633" y="454.18" text-anchor="end" font-size="11" fill="#323130" fill-opacity="0.85">関西空港</text>
<text x="633" y="460.25" text-anchor="end" font-size="11" fill="#323130" fill-opacity="0.85">不明</text>
<text x="633" y="466.32" text-anchor="end" font-size="11" fill="#323130" fill-opacity="0.85">その他空港</text>
<text x="633" y="472.39" text-anchor="end" font-size="11" fill="#323130" fill-opacity="0.85">関西空港</text>
<text x="633" y="478.46" text-anchor="end" font-size="11" fill="#323130" fill-opacity="0.85">成田空港</text>
<text x="633" y="484.53" text-anchor="end" font-size="11" fill="#323130" fill-opacity="0.85">福岡空港</text>
<text x="633" y="490.60" text-anchor="end" font-size="11" fill="#323130" fill-opacity="0.85">関西空港</text>
<text x="633" y="496.67" text-anchor="end" font-size="11" fill="#323130" fill-opacity="0.85">中部空港</text>
<text x="633" y="502.74" text-anchor="end" font-size="11" fill="#323130" fill-opacity="0.85">福岡空港</text>
<text x="633" y="508.81" text-anchor="end" font-size="11" fill="#323130" fill-opacity="0.85">成田空港</text>
<text x="633" y="514.88" text-anchor="end" font-size="11" fill="#323130" fill-opacity="0.85">福岡空港</text>
<text x="633" y="520.95" text-anchor="end" font-size="11" fill="#323130" fill-opacity="0.85">福岡空港</text>
<text x="633" y="527.02" text-anchor="end" font-size="11" fill="#323130" fill-opacity="0.85">その他空港</text>
<text x="633" y="533.09" text-anchor="end" font-size="11" fill="#323130" fill-opacity="0.85">福岡空港</text>
<text x="633" y="539.16" text-anchor="end" font-size="11" fill="#323130" fill-opacity="0.85">鹿児島空港</text>
<text x="633" y="545.23" text-anchor="end" font-size="11" fill="#323130" fill-opacity="0.85">成田空港</text>
<text x="633" y="551.30" text-anchor="end" font-size="11" fill="#323130" fill-opacity="0.85">羽田空港</text>
<text x="633" y="557.37" text-anchor="end" font-size="11" fill="#323130" fill-opacity="0.85">鹿児島空港</text>
<text x="633" y="563.44" text-anchor="end" font-size="11" fill="#323130" fill-opacity="0.85">羽田空港</text>
<text x="633" y="569.51" text-anchor="end" font-size="11" fill="#323130" fill-opacity="0.85">福岡空港</text>
<text x="633" y="575.58" text-anchor="end" font-size="11" fill="#323130" fill-opacity="0.85">成田空港</text>
<text x="633" y="581.65" text-anchor="end" font-size="11" fill="#323130" fill-opacity="0.85">成田空港</text>
<text x="633" y="587.72" text-anchor="end" font-size="11" fill="#323130" fill-opacity="0.85">福岡空港</text>
<text x="633" y="593.79" text-anchor="end" font-size="11" fill="#323130" fill-opacity="0.85">関西空港</text>
<text x="633" y="599.86" text-anchor="end" font-size="11" fill="#323130" fill-opacity="0.85">関西空港</text>
<text x="633" y="605.93" text-anchor="end" font-size="11" fill="#323130" fill-opacity="0.85">その他空港</text>
<text x="633" y="612.00" text-anchor="end" font-size="11" fill="#323130" fill-opacity="0.85">その他空港</text>
<text x="633" y="618.07" text-anchor="end" font-size="11" fill="#323130" fill-opacity="0.85">成田空港</text>
<text x="633" y="624.14" text-anchor="end" font-size="11" fill="#323130" fill-opacity="0.85">成田空港</text>
<text x="633" y="630.21" text-anchor="end" font-size="11" fill="#323130" fill-opacity="0.85">成田空港</text>
<text x="633" y="636.28" text-anchor="end" font-size="11" fill="#323130" fill-opacity="0.85">その他空港</text>
<text x="633" y="642.35" text-anchor="end" font-size="11" fill="#323130" fill-opacity="0.85">鹿児島空港</text>
<text x="633" y="648.42" text-anchor="end" font-size="11" fill="#323130" fill-opacity="0.85">関西空港</text>
<text x="633" y="654.49" text-anchor="end" font-size="11" fill="#323130" fill-opacity="0.85">羽田空港</text>
<text x="633" y="660.56" text-anchor="end" font-size="11" fill="#323130" fill-opacity="0.85">関西空港</text>
<text x="633" y="666.63" text-anchor="end" font-size="11" fill="#323130" fill-opacity="0.85">福岡空港</text>
<text x="633" y="672.70" text-anchor="end" font-size="11" fill="#323130" fill-opacity="0.85">福岡空港</text>
<text x="633" y="678.77" text-anchor="end" font-size="11" fill="#323130" fill-opacity="0.85">関西空港</text>
<text x="633" y="684.84" text-anchor="end" font-size="11" fill="#323130" fill-opacity="0.85">成田空港</text>
<text x="633" y="690.91" text-anchor="end" font-size="11" fill="#323130" fill-opacity="0.85">鹿児島空港</text>
<text x="633" y="696.98" text-anchor="end" font-size="11" fill="#323130" fill-opacity="0.85">成田空港</text>
<text x="633" y="703.05" text-anchor="end" font-size="11" fill="#323130" fill-opacity="0.85">成田空港</text>
<text x="633" y="709.12" text-anchor="end" font-size="11" fill="#323130" fill-opacity="0.85">福岡空港</text>
<text x="633" y="715.19" text-anchor="end" font-size="11" fill="#323130" fill-opacity="0.85">鹿児島空港</text>
<text x="633" y="721.26" text-anchor="end" font-size="11" fill="#323130" fill-opacity="0.85">福岡空港</text>
<text x="633" y="727.33" text-anchor="end" font-size="11" fill="#323130" fill-opacity="0.85">成田空港</text>
<text x="633" y="733.40" text-anchor="end" font-size="11" fill="#323130" fill-opacity="0.85">羽田空港</text>
<circle cx="654.8" cy="729.40" r="10.3" fill="#b0c4de"/>
<path d="M654.8 729.40L660.71 737.84A10.3 10.3 0 0 1 644.85 726.73z" fill="#b7a6f7"/>
<circle cx="654.8" cy="723.33" r="10.3" fill="#b0c4de"/>
<path d="M654.8 723.33L660.71 731.77A10.3 10.3 0 0 1 644.85 720.66z" fill="#be5dc9"/>
<circle cx="654.8" cy="717.26" r="10.3" fill="#b0c4de"/>
<path d="M654.8 717.26L660.71 725.70A10.3 10.3 0 0 1 644.85 714.59z" fill="#d9b300"/>
<circle cx="654.8" cy="711.19" r="10.3" fill="#b0c4de"/>
<path d="M654.8 711.19L660.71 719.63A10.3 10.3 0 0 1 644.85 708.52z" fill="#12239e"/>
<circle cx="654.8" cy="705.12" r="10.3" fill="#b0c4de"/>
<path d="M654.8 705.12L660.71 713.56A10.3 10.3 0 0 1 644.85 702.45z" fill="#d9b300"/>
<circle cx="654.8" cy="699.05" r="10.3" fill="#b0c4de"/>
<path d="M654.8 699.05L660.71 707.49A10.3 10.3 0 0 1 644.85 696.38z" fill="#be5dc9"/>
<circle cx="654.8" cy="692.98" r="10.3" fill="#b0c4de"/>
<path d="M654.8 692.98L660.71 701.42A10.3 10.3 0 0 1 644.85 690.31z" fill="#be5dc9"/>
<circle cx="654.8" cy="686.91" r="10.3" fill="#b0c4de"/>
<path d="M654.8 686.91L660.71 695.35A10.3 10.3 0 0 1 644.85 684.24z" fill="#12239e"/>
<circle cx="654.8" cy="680.84" r="10.3" fill="#b0c4de"/>
<path d="M654.8 680.84L660.71 689.28A10.3 10.3 0 0 1 644.85 678.17z" fill="#be5dc9"/>
<circle cx="654.8" cy="674.77" r="10.3" fill="#b0c4de"/>
<path d="M654.8 674.77L660.71 683.21A10.3 10.3 0 0 1 644.85 672.10z" fill="#4092ff"/>
<circle cx="654.8" cy="668.70" r="10.3" fill="#b0c4de"/>
<path d="M654.8 668.70L660.71 677.14A10.3 10.3 0 0 1 644.85 666.03z" fill="#d9b300"/>
<circle cx="654.8" cy="662.63" r="10.3" fill="#b0c4de"/>
<path d="M654.8 662.63L660.71 671.07A10.3 10.3 0 0 1 644.85 659.96z" fill="#d9b300"/>
<circle cx="654.8" cy="656.56" r="10.3" fill="#b0c4de"/>
<path d="M654.8 656.56L660.71 665.00A10.3 10.3 0 0 1 644.85 653.89z" fill="#4092ff"/>
<circle cx="654.8" cy="650.49" r="10.3" fill="#b0c4de"/>
<path d="M654.8 650.49L660.71 658.93A10.3 10.3 0 0 1 644.85 647.82z" fill="#b7a6f7"/>
<circle cx="654.8" cy="644.42" r="10.3" fill="#b0c4de"/>
<path d="M654.8 644.42L660.71 652.86A10.3 10.3 0 0 1 644.85 641.75z" fill="#4092ff"/>
<circle cx="654.8" cy="638.35" r="10.3" fill="#b0c4de"/>
<path d="M654.8 638.35L660.71 646.79A10.3 10.3 0 0 1 644.85 635.68z" fill="#12239e"/>
<circle cx="654.8" cy="632.28" r="10.3" fill="#b0c4de"/>
<path d="M654.8 632.28L660.71 640.72A10.3 10.3 0 0 1 644.85 629.61z" fill="#1aab40"/>
<circle cx="654.8" cy="626.21" r="10.3" fill="#b0c4de"/>
<path d="M654.8 626.21L660.71 634.65A10.3 10.3 0 0 1 644.85 623.54z" fill="#be5dc9"/>
<circle cx="654.8" cy="620.14" r="10.3" fill="#b0c4de"/>
<path d="M654.8 620.14L660.71 628.58A10.3 10.3 0 0 1 644.85 617.47z" fill="#be5dc9"/>
<circle cx="654.8" cy="614.07" r="10.3" fill="#b0c4de"/>
<path d="M654.8 614.07L660.71 622.51A10.3 10.3 0 0 1 644.85 611.40z" fill="#be5dc9"/>
<circle cx="654.8" cy="608.00" r="10.3" fill="#b0c4de"/>
<path d="M654.8 608.00L660.71 616.44A10.3 10.3 0 0 1 644.85 605.33z" fill="#2a8c2a"/>
<circle cx="654.8" cy="601.93" r="10.3" fill="#b0c4de"/>
<path d="M654.8 601.93L660.71 610.37A10.3 10.3 0 0 1 644.85 599.26z" fill="#1aab40"/>
<circle cx="654.8" cy="595.86" r="10.3" fill="#b0c4de"/>
<path d="M654.8 595.86L660.71 604.30A10.3 10.3 0 0 1 644.85 593.19z" fill="#4092ff"/>
<circle cx="654.8" cy="589.79" r="10.3" fill="#b0c4de"/>
<path d="M654.8 589.79L660.71 598.23A10.3 10.3 0 0 1 644.85 587.12z" fill="#4092ff"/>
<circle cx="654.8" cy="583.72" r="10.3" fill="#b0c4de"/>
<path d="M654.8 583.72L660.71 592.16A10.3 10.3 0 0 1 644.85 581.05z" fill="#d9b300"/>
<circle cx="654.8" cy="577.65" r="10.3" fill="#b0c4de"/>
<path d="M654.8 577.65L660.71 586.09A10.3 10.3 0 0 1 644.85 574.98z" fill="#be5dc9"/>
<circle cx="654.8" cy="571.58" r="10.3" fill="#b0c4de"/>
<path d="M654.8 571.58L660.71 580.02A10.3 10.3 0 0 1 644.85 568.91z" fill="#be5dc9"/>
<circle cx="654.8" cy="565.51" r="10.3" fill="#b0c4de"/>
<path d="M654.8 565.51L660.71 573.95A10.3 10.3 0 0 1 644.85 562.84z" fill="#d9b300"/>
<circle cx="654.8" cy="559.44" r="10.3" fill="#b0c4de"/>
<path d="M654.8 559.44L660.71 567.88A10.3 10.3 0 0 1 644.85 556.77z" fill="#b7a6f7"/>
<circle cx="654.8" cy="553.37" r="10.3" fill="#b0c4de"/>
<path d="M654.8 553.37L660.71 561.81A10.3 10.3 0 0 1 644.85 550.70z" fill="#12239e"/>
<circle cx="654.8" cy="547.30" r="10.3" fill="#b0c4de"/>
<path d="M654.8 547.30L660.71 555.74A10.3 10.3 0 0 1 644.85 544.63z" fill="#b7a6f7"/>
<circle cx="654.8" cy="541.23" r="10.3" fill="#b0c4de"/>
<path d="M654.8 541.23L660.71 549.67A10.3 10.3 0 0 1 644.85 538.56z" fill="#be5dc9"/>
<circle cx="654.8" cy="535.16" r="10.3" fill="#b0c4de"/>
<path d="M654.8 535.16L660.71 543.60A10.3 10.3 0 0 1 644.85 532.49z" fill="#12239e"/>
<circle cx="654.8" cy="529.09" r="10.3" fill="#b0c4de"/>
<path d="M654.8 529.09L660.71 537.53A10.3 10.3 0 0 1 644.85 526.42z" fill="#d9b300"/>
<circle cx="654.8" cy="523.02" r="10.3" fill="#b0c4de"/>
<path d="M654.8 523.02L660.71 531.46A10.3 10.3 0 0 1 644.85 520.35z" fill="#1aab40"/>
<circle cx="654.8" cy="516.95" r="10.3" fill="#b0c4de"/>
<path d="M654.8 516.95L660.71 525.39A10.3 10.3 0 0 1 644.85 514.28z" fill="#d9b300"/>
<circle cx="654.8" cy="510.88" r="10.3" fill="#b0c4de"/>
<path d="M654.8 510.88L660.71 519.32A10.3 10.3 0 0 1 644.85 508.21z" fill="#d9b300"/>
<circle cx="654.8" cy="504.81" r="10.3" fill="#b0c4de"/>
<path d="M654.8 504.81L660.71 513.25A10.3 10.3 0 0 1 644.85 502.14z" fill="#be5dc9"/>
<circle cx="654.8" cy="498.74" r="10.3" fill="#b0c4de"/>
<path d="M654.8 498.74L660.71 507.18A10.3 10.3 0 0 1 644.85 496.07z" fill="#d9b300"/>
<circle cx="654.8" cy="492.67" r="10.3" fill="#b0c4de"/>
<path d="M654.8 492.67L660.71 501.11A10.3 10.3 0 0 1 644.85 490.00z" fill="#a1118f"/>
<circle cx="654.8" cy="486.60" r="10.3" fill="#b0c4de"/>
<path d="M654.8 486.60L660.71 495.04A10.3 10.3 0 0 1 644.85 483.93z" fill="#4092ff"/>
<circle cx="654.8" cy="480.53" r="10.3" fill="#b0c4de"/>
<path d="M654.8 480.53L660.71 488.97A10.3 10.3 0 0 1 644.85 477.86z" fill="#d9b300"/>
<circle cx="654.8" cy="474.46" r="10.3" fill="#b0c4de"/>
<path d="M654.8 474.46L660.71 482.90A10.3 10.3 0 0 1 644.85 471.79z" fill="#be5dc9"/>
<circle cx="654.8" cy="468.39" r="10.3" fill="#b0c4de"/>
<path d="M654.8 468.39L660.71 476.83A10.3 10.3 0 0 1 644.85 465.72z" fill="#4092ff"/>
<circle cx="654.8" cy="462.32" r="10.3" fill="#b0c4de"/>
<path d="M654.8 462.32L660.71 470.76A10.3 10.3 0 0 1 644.85 459.65z" fill="#1aab40"/>
<circle cx="654.8" cy="456.25" r="10.3" fill="#b0c4de"/>
<path d="M654.8 456.25L663.72 461.40A10.3 10.3 0 0 1 645.12 452.73z" fill="#0b2a5c"/>
<circle cx="654.8" cy="450.18" r="10.3" fill="#b0c4de"/>
<path d="M654.8 450.18L663.72 455.33A10.3 10.3 0 0 1 645.12 446.66z" fill="#1f6fb4"/>
<circle cx="654.8" cy="444.11" r="10.3" fill="#b0c4de"/>
<path d="M654.8 444.11L663.72 449.26A10.3 10.3 0 0 1 645.12 440.59z" fill="#a1118f"/>
<circle cx="654.8" cy="438.04" r="10.3" fill="#b0c4de"/>
<path d="M654.8 438.04L663.72 443.19A10.3 10.3 0 0 1 645.12 434.52z" fill="#b7a6f7"/>
<circle cx="654.8" cy="431.97" r="10.3" fill="#b0c4de"/>
<path d="M654.8 431.97L663.72 437.12A10.3 10.3 0 0 1 645.12 428.45z" fill="#be5dc9"/>
<circle cx="654.8" cy="425.90" r="10.3" fill="#b0c4de"/>
<path d="M654.8 425.90L663.72 431.05A10.3 10.3 0 0 1 645.12 422.38z" fill="#d9b300"/>
<circle cx="654.8" cy="419.83" r="10.3" fill="#b0c4de"/>
<path d="M654.8 419.83L654.08 409.56A10.3 10.3 0 0 1 655.52 409.56z" fill="#12239e"/>
<circle cx="654.8" cy="413.76" r="10.3" fill="#b0c4de"/>
<path d="M654.8 413.76L663.72 418.91A10.3 10.3 0 0 1 645.12 410.24z" fill="#4092ff"/>
<circle cx="654.8" cy="407.69" r="10.3" fill="#b0c4de"/>
<path d="M654.8 407.69L663.72 412.84A10.3 10.3 0 0 1 645.12 404.17z" fill="#be5dc9"/>
<circle cx="654.8" cy="401.62" r="10.3" fill="#b0c4de"/>
<path d="M654.8 401.62L663.72 406.77A10.3 10.3 0 0 1 645.12 398.10z" fill="#b7a6f7"/>
<circle cx="654.8" cy="395.55" r="10.3" fill="#b0c4de"/>
<path d="M654.8 395.55L663.72 400.70A10.3 10.3 0 0 1 645.12 392.03z" fill="#e8636a"/>
<circle cx="654.8" cy="389.48" r="10.3" fill="#b0c4de"/>
<path d="M654.8 389.48L663.72 394.63A10.3 10.3 0 0 1 645.12 385.96z" fill="#d9b300"/>
<circle cx="654.8" cy="383.41" r="10.3" fill="#b0c4de"/>
<path d="M654.8 383.41L654.08 373.14A10.3 10.3 0 0 1 655.52 373.14z" fill="#12239e"/>
<circle cx="654.8" cy="377.34" r="10.3" fill="#b0c4de"/>
<path d="M654.8 377.34L663.72 382.49A10.3 10.3 0 0 1 645.12 373.82z" fill="#3f1d5c"/>
<circle cx="654.8" cy="371.27" r="10.3" fill="#b0c4de"/>
<path d="M654.8 371.27L663.72 376.42A10.3 10.3 0 0 1 645.12 367.75z" fill="#b7a6f7"/>
<circle cx="654.8" cy="365.20" r="10.3" fill="#b0c4de"/>
<path d="M654.8 365.20L663.72 370.35A10.3 10.3 0 0 1 645.12 361.68z" fill="#a1118f"/>
<circle cx="654.8" cy="359.13" r="10.3" fill="#b0c4de"/>
<path d="M654.8 359.13L663.72 364.28A10.3 10.3 0 0 1 645.12 355.61z" fill="#d9b300"/>
<circle cx="654.8" cy="353.06" r="10.3" fill="#b0c4de"/>
<path d="M654.8 353.06L654.08 342.79A10.3 10.3 0 0 1 655.52 342.79z" fill="#12239e"/>
<circle cx="654.8" cy="346.99" r="10.3" fill="#b0c4de"/>
<path d="M654.8 346.99L663.72 352.14A10.3 10.3 0 0 1 645.12 343.47z" fill="#c8102e"/>
<circle cx="654.8" cy="340.92" r="10.3" fill="#b0c4de"/>
<path d="M654.8 340.92L663.72 346.07A10.3 10.3 0 0 1 645.12 337.40z" fill="#3f1d5c"/>
<circle cx="654.8" cy="334.85" r="10.3" fill="#b0c4de"/>
<path d="M654.8 334.85L663.72 340.00A10.3 10.3 0 0 1 645.12 331.33z" fill="#c9146c"/>
<circle cx="654.8" cy="328.78" r="10.3" fill="#b0c4de"/>
<path d="M654.8 328.78L663.72 333.93A10.3 10.3 0 0 1 645.12 325.26z" fill="#b7a6f7"/>
<circle cx="654.8" cy="322.71" r="10.3" fill="#b0c4de"/>
<path d="M654.8 322.71L663.72 327.86A10.3 10.3 0 0 1 645.12 319.19z" fill="#a1118f"/>
<circle cx="654.8" cy="316.64" r="10.3" fill="#b0c4de"/>
<path d="M654.8 316.64L663.72 321.79A10.3 10.3 0 0 1 645.12 313.12z" fill="#4092ff"/>
<circle cx="654.8" cy="310.57" r="10.3" fill="#b0c4de"/>
<path d="M654.8 310.57L663.72 315.72A10.3 10.3 0 0 1 645.12 307.05z" fill="#d9b300"/>
<circle cx="654.8" cy="304.50" r="10.3" fill="#b0c4de"/>
<path d="M654.8 304.50L654.08 294.23A10.3 10.3 0 0 1 655.52 294.23z" fill="#12239e"/>
<rect x="665" y="290" width="235" height="450" fill="#e66c37"/>
<rect x="664.8" y="300.00" width="39.2" height="9" fill="#fff" fill-opacity="0.6"/>
<rect x="664.8" y="306.07" width="39.2" height="9" fill="#fff" fill-opacity="0.6"/>
<rect x="683.4" y="312.14" width="20.6" height="9" fill="#fff" fill-opacity="0.6"/>
<rect x="683.4" y="318.21" width="20.6" height="9" fill="#fff" fill-opacity="0.6"/>
<rect x="683.4" y="324.28" width="20.6" height="9" fill="#fff" fill-opacity="0.6"/>
<rect x="683.4" y="330.35" width="20.6" height="9" fill="#fff" fill-opacity="0.6"/>
<rect x="683.4" y="336.42" width="20.6" height="9" fill="#fff" fill-opacity="0.6"/>
<rect x="689.6" y="342.49" width="14.4" height="9" fill="#fff" fill-opacity="0.6"/>
<rect x="664.8" y="348.56" width="39.2" height="9" fill="#fff" fill-opacity="0.6"/>
<rect x="664.8" y="354.63" width="39.2" height="9" fill="#fff" fill-opacity="0.6"/>
<rect x="683.4" y="360.70" width="20.6" height="9" fill="#fff" fill-opacity="0.6"/>
<rect x="683.4" y="366.77" width="20.6" height="9" fill="#fff" fill-opacity="0.6"/>
<rect x="683.4" y="372.84" width="20.6" height="9" fill="#fff" fill-opacity="0.6"/>
<rect x="664.8" y="378.91" width="39.2" height="9" fill="#fff" fill-opacity="0.6"/>
<rect x="664.8" y="384.98" width="39.2" height="9" fill="#fff" fill-opacity="0.6"/>
<rect x="683.4" y="391.05" width="20.6" height="9" fill="#fff" fill-opacity="0.6"/>
<rect x="683.4" y="397.12" width="20.6" height="9" fill="#fff" fill-opacity="0.6"/>
<rect x="683.4" y="403.19" width="20.6" height="9" fill="#fff" fill-opacity="0.6"/>
<rect x="683.4" y="409.26" width="20.6" height="9" fill="#fff" fill-opacity="0.6"/>
<rect x="664.8" y="415.33" width="39.2" height="9" fill="#fff" fill-opacity="0.6"/>
<rect x="664.8" y="421.40" width="39.2" height="9" fill="#fff" fill-opacity="0.6"/>
<rect x="683.4" y="427.47" width="20.6" height="9" fill="#fff" fill-opacity="0.6"/>
<rect x="683.4" y="433.54" width="20.6" height="9" fill="#fff" fill-opacity="0.6"/>
<rect x="683.4" y="439.61" width="20.6" height="9" fill="#fff" fill-opacity="0.6"/>
<rect x="683.4" y="445.68" width="20.6" height="9" fill="#fff" fill-opacity="0.6"/>
<rect x="683.4" y="451.75" width="20.6" height="9" fill="#fff" fill-opacity="0.6"/>
<rect x="683.4" y="457.82" width="20.6" height="9" fill="#fff" fill-opacity="0.6"/>
<rect x="683.4" y="463.89" width="20.6" height="9" fill="#fff" fill-opacity="0.6"/>
<rect x="683.4" y="469.96" width="20.6" height="9" fill="#fff" fill-opacity="0.6"/>
<rect x="683.4" y="476.03" width="20.6" height="9" fill="#fff" fill-opacity="0.6"/>
<rect x="683.4" y="482.10" width="20.6" height="9" fill="#fff" fill-opacity="0.6"/>
<rect x="683.4" y="488.17" width="20.6" height="9" fill="#fff" fill-opacity="0.6"/>
<rect x="683.4" y="494.24" width="20.6" height="9" fill="#fff" fill-opacity="0.6"/>
<rect x="683.4" y="500.31" width="20.6" height="9" fill="#fff" fill-opacity="0.6"/>
<rect x="683.4" y="506.38" width="20.6" height="9" fill="#fff" fill-opacity="0.6"/>
<rect x="683.4" y="512.45" width="20.6" height="9" fill="#fff" fill-opacity="0.6"/>
<rect x="683.4" y="518.52" width="20.6" height="9" fill="#fff" fill-opacity="0.6"/>
<rect x="683.4" y="524.59" width="20.6" height="9" fill="#fff" fill-opacity="0.6"/>
<rect x="683.4" y="530.66" width="20.6" height="9" fill="#fff" fill-opacity="0.6"/>
<rect x="683.4" y="536.73" width="20.6" height="9" fill="#fff" fill-opacity="0.6"/>
<rect x="683.4" y="542.80" width="20.6" height="9" fill="#fff" fill-opacity="0.6"/>
<rect x="683.4" y="548.87" width="20.6" height="9" fill="#fff" fill-opacity="0.6"/>
<rect x="689.6" y="554.94" width="14.4" height="9" fill="#fff" fill-opacity="0.6"/>
<rect x="683.4" y="561.01" width="20.6" height="9" fill="#fff" fill-opacity="0.6"/>
<rect x="683.4" y="567.08" width="20.6" height="9" fill="#fff" fill-opacity="0.6"/>
<rect x="683.4" y="573.15" width="20.6" height="9" fill="#fff" fill-opacity="0.6"/>
<rect x="683.4" y="579.22" width="20.6" height="9" fill="#fff" fill-opacity="0.6"/>
<rect x="689.6" y="585.29" width="14.4" height="9" fill="#fff" fill-opacity="0.6"/>
<rect x="683.4" y="591.36" width="20.6" height="9" fill="#fff" fill-opacity="0.6"/>
<rect x="683.4" y="597.43" width="20.6" height="9" fill="#fff" fill-opacity="0.6"/>
<rect x="683.4" y="603.50" width="20.6" height="9" fill="#fff" fill-opacity="0.6"/>
<rect x="683.4" y="609.57" width="20.6" height="9" fill="#fff" fill-opacity="0.6"/>
<rect x="683.4" y="615.64" width="20.6" height="9" fill="#fff" fill-opacity="0.6"/>
<rect x="683.4" y="621.71" width="20.6" height="9" fill="#fff" fill-opacity="0.6"/>
<rect x="683.4" y="627.78" width="20.6" height="9" fill="#fff" fill-opacity="0.6"/>
<rect x="683.4" y="633.85" width="20.6" height="9" fill="#fff" fill-opacity="0.6"/>
<rect x="683.4" y="639.92" width="20.6" height="9" fill="#fff" fill-opacity="0.6"/>
<rect x="683.4" y="645.99" width="20.6" height="9" fill="#fff" fill-opacity="0.6"/>
<rect x="683.4" y="652.06" width="20.6" height="9" fill="#fff" fill-opacity="0.6"/>
<rect x="683.4" y="658.13" width="20.6" height="9" fill="#fff" fill-opacity="0.6"/>
<rect x="683.4" y="664.20" width="20.6" height="9" fill="#fff" fill-opacity="0.6"/>
<rect x="683.4" y="670.27" width="20.6" height="9" fill="#fff" fill-opacity="0.6"/>
<rect x="683.4" y="676.34" width="20.6" height="9" fill="#fff" fill-opacity="0.6"/>
<rect x="683.4" y="682.41" width="20.6" height="9" fill="#fff" fill-opacity="0.6"/>
<rect x="683.4" y="688.48" width="20.6" height="9" fill="#fff" fill-opacity="0.6"/>
<rect x="683.4" y="694.55" width="20.6" height="9" fill="#fff" fill-opacity="0.6"/>
<rect x="683.4" y="700.62" width="20.6" height="9" fill="#fff" fill-opacity="0.6"/>
<rect x="689.6" y="706.69" width="14.4" height="9" fill="#fff" fill-opacity="0.6"/>
<rect x="689.6" y="712.76" width="14.4" height="9" fill="#fff" fill-opacity="0.6"/>
<rect x="683.4" y="718.83" width="20.6" height="9" fill="#fff" fill-opacity="0.6"/>
<rect x="689.6" y="724.90" width="14.4" height="9" fill="#fff" fill-opacity="0.6"/>
<text x="703" y="308.50" text-anchor="end" font-size="11" fill="#484644">0.06 M</text>
<text x="703" y="314.57" text-anchor="end" font-size="11" fill="#484644">1.01 k</text>
<text x="703" y="320.64" text-anchor="end" font-size="11" fill="#484644">209</text>
<text x="703" y="326.71" text-anchor="end" font-size="11" fill="#484644">203</text>
<text x="703" y="332.78" text-anchor="end" font-size="11" fill="#484644">132</text>
<text x="703" y="338.85" text-anchor="end" font-size="11" fill="#484644">132</text>
<text x="703" y="344.92" text-anchor="end" font-size="11" fill="#484644">127</text>
<text x="703" y="350.99" text-anchor="end" font-size="11" fill="#484644">89</text>
<text x="703" y="357.06" text-anchor="end" font-size="11" fill="#484644">0.05 M</text>
<text x="703" y="363.13" text-anchor="end" font-size="11" fill="#484644">1.39 k</text>
<text x="703" y="369.20" text-anchor="end" font-size="11" fill="#484644">220</text>
<text x="703" y="375.27" text-anchor="end" font-size="11" fill="#484644">160</text>
<text x="703" y="381.34" text-anchor="end" font-size="11" fill="#484644">139</text>
<text x="703" y="387.41" text-anchor="end" font-size="11" fill="#484644">12.7 k</text>
<text x="703" y="393.48" text-anchor="end" font-size="11" fill="#484644">2.97 k</text>
<text x="703" y="399.55" text-anchor="end" font-size="11" fill="#484644">809</text>
<text x="703" y="405.62" text-anchor="end" font-size="11" fill="#484644">172</text>
<text x="703" y="411.69" text-anchor="end" font-size="11" fill="#484644">133</text>
<text x="703" y="417.76" text-anchor="end" font-size="11" fill="#484644">133</text>
<text x="703" y="423.83" text-anchor="end" font-size="11" fill="#484644">0.01 M</text>
<text x="703" y="429.90" text-anchor="end" font-size="11" fill="#484644">2.79 k</text>
<text x="703" y="435.97" text-anchor="end" font-size="11" fill="#484644">411</text>
<text x="703" y="442.04" text-anchor="end" font-size="11" fill="#484644">382</text>
<text x="703" y="448.11" text-anchor="end" font-size="11" fill="#484644">347</text>
<text x="703" y="454.18" text-anchor="end" font-size="11" fill="#484644">200</text>
<text x="703" y="460.25" text-anchor="end" font-size="11" fill="#484644">199</text>
<text x="703" y="466.32" text-anchor="end" font-size="11" fill="#484644">758</text>
<text x="703" y="472.39" text-anchor="end" font-size="11" fill="#484644">551</text>
<text x="703" y="478.46" text-anchor="end" font-size="11" fill="#484644">524</text>
<text x="703" y="484.53" text-anchor="end" font-size="11" fill="#484644">283</text>
<text x="703" y="490.60" text-anchor="end" font-size="11" fill="#484644">688</text>
<text x="703" y="496.67" text-anchor="end" font-size="11" fill="#484644">135</text>
<text x="703" y="502.74" text-anchor="end" font-size="11" fill="#484644">130</text>
<text x="703" y="508.81" text-anchor="end" font-size="11" fill="#484644">103</text>
<text x="703" y="514.88" text-anchor="end" font-size="11" fill="#484644">617</text>
<text x="703" y="520.95" text-anchor="end" font-size="11" fill="#484644">500</text>
<text x="703" y="527.02" text-anchor="end" font-size="11" fill="#484644">479</text>
<text x="703" y="533.09" text-anchor="end" font-size="11" fill="#484644">152</text>
<text x="703" y="539.16" text-anchor="end" font-size="11" fill="#484644">459</text>
<text x="703" y="545.23" text-anchor="end" font-size="11" fill="#484644">297</text>
<text x="703" y="551.30" text-anchor="end" font-size="11" fill="#484644">188</text>
<text x="703" y="557.37" text-anchor="end" font-size="11" fill="#484644">424</text>
<text x="703" y="563.44" text-anchor="end" font-size="11" fill="#484644">96</text>
<text x="703" y="569.51" text-anchor="end" font-size="11" fill="#484644">395</text>
<text x="703" y="575.58" text-anchor="end" font-size="11" fill="#484644">139</text>
<text x="703" y="581.65" text-anchor="end" font-size="11" fill="#484644">395</text>
<text x="703" y="587.72" text-anchor="end" font-size="11" fill="#484644">249</text>
<text x="703" y="593.79" text-anchor="end" font-size="11" fill="#484644">72</text>
<text x="703" y="599.86" text-anchor="end" font-size="11" fill="#484644">374</text>
<text x="703" y="605.93" text-anchor="end" font-size="11" fill="#484644">264</text>
<text x="703" y="612.00" text-anchor="end" font-size="11" fill="#484644">274</text>
<text x="703" y="618.07" text-anchor="end" font-size="11" fill="#484644">207</text>
<text x="703" y="624.14" text-anchor="end" font-size="11" fill="#484644">359</text>
<text x="703" y="630.21" text-anchor="end" font-size="11" fill="#484644">351</text>
<text x="703" y="636.28" text-anchor="end" font-size="11" fill="#484644">191</text>
<text x="703" y="642.35" text-anchor="end" font-size="11" fill="#484644">160</text>
<text x="703" y="648.42" text-anchor="end" font-size="11" fill="#484644">130</text>
<text x="703" y="654.49" text-anchor="end" font-size="11" fill="#484644">305</text>
<text x="703" y="660.56" text-anchor="end" font-size="11" fill="#484644">294</text>
<text x="703" y="666.63" text-anchor="end" font-size="11" fill="#484644">253</text>
<text x="703" y="672.70" text-anchor="end" font-size="11" fill="#484644">248</text>
<text x="703" y="678.77" text-anchor="end" font-size="11" fill="#484644">124</text>
<text x="703" y="684.84" text-anchor="end" font-size="11" fill="#484644">232</text>
<text x="703" y="690.91" text-anchor="end" font-size="11" fill="#484644">161</text>
<text x="703" y="696.98" text-anchor="end" font-size="11" fill="#484644">229</text>
<text x="703" y="703.05" text-anchor="end" font-size="11" fill="#484644">146</text>
<text x="703" y="709.12" text-anchor="end" font-size="11" fill="#484644">108</text>
<text x="703" y="715.19" text-anchor="end" font-size="11" fill="#484644">92</text>
<text x="703" y="721.26" text-anchor="end" font-size="11" fill="#484644">72</text>
<text x="703" y="727.33" text-anchor="end" font-size="11" fill="#484644">100</text>
<text x="703" y="733.40" text-anchor="end" font-size="11" fill="#484644">79</text>
<rect x="869" y="300.00" width="23" height="9" fill="#fff" fill-opacity="0.6"/>
<rect x="869" y="306.07" width="23" height="9" fill="#fff" fill-opacity="0.6"/>
<rect x="869" y="312.14" width="23" height="9" fill="#fff" fill-opacity="0.6"/>
<rect x="869" y="318.21" width="23" height="9" fill="#fff" fill-opacity="0.6"/>
<rect x="869" y="324.28" width="23" height="9" fill="#fff" fill-opacity="0.6"/>
<rect x="869" y="330.35" width="23" height="9" fill="#fff" fill-opacity="0.6"/>
<rect x="869" y="336.42" width="23" height="9" fill="#fff" fill-opacity="0.6"/>
<rect x="869" y="342.49" width="23" height="9" fill="#fff" fill-opacity="0.6"/>
<rect x="869" y="348.56" width="23" height="9" fill="#fff" fill-opacity="0.6"/>
<rect x="869" y="354.63" width="23" height="9" fill="#fff" fill-opacity="0.6"/>
<rect x="869" y="360.70" width="23" height="9" fill="#fff" fill-opacity="0.6"/>
<rect x="869" y="366.77" width="23" height="9" fill="#fff" fill-opacity="0.6"/>
<rect x="869" y="372.84" width="23" height="9" fill="#fff" fill-opacity="0.6"/>
<rect x="869" y="378.91" width="23" height="9" fill="#fff" fill-opacity="0.6"/>
<rect x="869" y="384.98" width="23" height="9" fill="#fff" fill-opacity="0.6"/>
<rect x="869" y="391.05" width="23" height="9" fill="#fff" fill-opacity="0.6"/>
<rect x="869" y="397.12" width="23" height="9" fill="#fff" fill-opacity="0.6"/>
<rect x="869" y="403.19" width="23" height="9" fill="#fff" fill-opacity="0.6"/>
<rect x="869" y="409.26" width="23" height="9" fill="#fff" fill-opacity="0.6"/>
<rect x="869" y="415.33" width="23" height="9" fill="#fff" fill-opacity="0.6"/>
<rect x="869" y="421.40" width="23" height="9" fill="#fff" fill-opacity="0.6"/>
<rect x="869" y="427.47" width="23" height="9" fill="#fff" fill-opacity="0.6"/>
<rect x="869" y="433.54" width="23" height="9" fill="#fff" fill-opacity="0.6"/>
<rect x="869" y="439.61" width="23" height="9" fill="#fff" fill-opacity="0.6"/>
<rect x="869" y="445.68" width="23" height="9" fill="#fff" fill-opacity="0.6"/>
<rect x="869" y="451.75" width="23" height="9" fill="#fff" fill-opacity="0.6"/>
<rect x="869" y="457.82" width="23" height="9" fill="#fff" fill-opacity="0.6"/>
<rect x="869" y="463.89" width="23" height="9" fill="#fff" fill-opacity="0.6"/>
<rect x="869" y="469.96" width="23" height="9" fill="#fff" fill-opacity="0.6"/>
<rect x="869" y="476.03" width="23" height="9" fill="#fff" fill-opacity="0.6"/>
<rect x="869" y="482.10" width="23" height="9" fill="#fff" fill-opacity="0.6"/>
<rect x="869" y="488.17" width="23" height="9" fill="#fff" fill-opacity="0.6"/>
<rect x="869" y="494.24" width="23" height="9" fill="#fff" fill-opacity="0.6"/>
<rect x="869" y="500.31" width="23" height="9" fill="#fff" fill-opacity="0.6"/>
<rect x="869" y="506.38" width="23" height="9" fill="#fff" fill-opacity="0.6"/>
<rect x="869" y="512.45" width="23" height="9" fill="#fff" fill-opacity="0.6"/>
<rect x="869" y="518.52" width="23" height="9" fill="#fff" fill-opacity="0.6"/>
<rect x="869" y="524.59" width="23" height="9" fill="#fff" fill-opacity="0.6"/>
<rect x="869" y="530.66" width="23" height="9" fill="#fff" fill-opacity="0.6"/>
<rect x="869" y="536.73" width="23" height="9" fill="#fff" fill-opacity="0.6"/>
<rect x="869" y="542.80" width="23" height="9" fill="#fff" fill-opacity="0.6"/>
<rect x="869" y="548.87" width="23" height="9" fill="#fff" fill-opacity="0.6"/>
<rect x="869" y="554.94" width="23" height="9" fill="#fff" fill-opacity="0.6"/>
<rect x="869" y="561.01" width="23" height="9" fill="#fff" fill-opacity="0.6"/>
<rect x="869" y="567.08" width="23" height="9" fill="#fff" fill-opacity="0.6"/>
<rect x="869" y="573.15" width="23" height="9" fill="#fff" fill-opacity="0.6"/>
<rect x="869" y="579.22" width="23" height="9" fill="#fff" fill-opacity="0.6"/>
<rect x="869" y="585.29" width="23" height="9" fill="#fff" fill-opacity="0.6"/>
<rect x="869" y="591.36" width="23" height="9" fill="#fff" fill-opacity="0.6"/>
<rect x="869" y="597.43" width="23" height="9" fill="#fff" fill-opacity="0.6"/>
<rect x="869" y="603.50" width="23" height="9" fill="#fff" fill-opacity="0.6"/>
<rect x="869" y="609.57" width="23" height="9" fill="#fff" fill-opacity="0.6"/>
<rect x="869" y="615.64" width="23" height="9" fill="#fff" fill-opacity="0.6"/>
<rect x="869" y="621.71" width="23" height="9" fill="#fff" fill-opacity="0.6"/>
<rect x="869" y="627.78" width="23" height="9" fill="#fff" fill-opacity="0.6"/>
<rect x="869" y="633.85" width="23" height="9" fill="#fff" fill-opacity="0.6"/>
<rect x="869" y="639.92" width="23" height="9" fill="#fff" fill-opacity="0.6"/>
<rect x="869" y="645.99" width="23" height="9" fill="#fff" fill-opacity="0.6"/>
<rect x="869" y="652.06" width="23" height="9" fill="#fff" fill-opacity="0.6"/>
<rect x="869" y="658.13" width="23" height="9" fill="#fff" fill-opacity="0.6"/>
<rect x="869" y="664.20" width="23" height="9" fill="#fff" fill-opacity="0.6"/>
<rect x="869" y="670.27" width="23" height="9" fill="#fff" fill-opacity="0.6"/>
<rect x="869" y="676.34" width="23" height="9" fill="#fff" fill-opacity="0.6"/>
<rect x="869" y="682.41" width="23" height="9" fill="#fff" fill-opacity="0.6"/>
<rect x="869" y="688.48" width="23" height="9" fill="#fff" fill-opacity="0.6"/>
<rect x="869" y="694.55" width="23" height="9" fill="#fff" fill-opacity="0.6"/>
<rect x="869" y="700.62" width="23" height="9" fill="#fff" fill-opacity="0.6"/>
<rect x="869" y="706.69" width="23" height="9" fill="#fff" fill-opacity="0.6"/>
<rect x="869" y="712.76" width="23" height="9" fill="#fff" fill-opacity="0.6"/>
<rect x="869" y="718.83" width="23" height="9" fill="#fff" fill-opacity="0.6"/>
<rect x="869" y="724.90" width="23" height="9" fill="#fff" fill-opacity="0.6"/>
<text x="891" y="308.50" text-anchor="end" font-size="11" fill="#1b1a19">鹿児島</text>
<text x="891" y="314.57" text-anchor="end" font-size="11" fill="#1b1a19">鹿児島</text>
<text x="891" y="320.64" text-anchor="end" font-size="11" fill="#1b1a19">鹿児島</text>
<text x="891" y="326.71" text-anchor="end" font-size="11" fill="#1b1a19">鹿児島</text>
<text x="891" y="332.78" text-anchor="end" font-size="11" fill="#1b1a19">鹿児島</text>
<text x="891" y="338.85" text-anchor="end" font-size="11" fill="#1b1a19">鹿児島</text>
<text x="891" y="344.92" text-anchor="end" font-size="11" fill="#1b1a19">鹿児島</text>
<text x="891" y="350.99" text-anchor="end" font-size="11" fill="#1b1a19">鹿児島</text>
<text x="891" y="357.06" text-anchor="end" font-size="11" fill="#1b1a19">鹿児島</text>
<text x="891" y="363.13" text-anchor="end" font-size="11" fill="#1b1a19">鹿児島</text>
<text x="891" y="369.20" text-anchor="end" font-size="11" fill="#1b1a19">鹿児島</text>
<text x="891" y="375.27" text-anchor="end" font-size="11" fill="#1b1a19">鹿児島</text>
<text x="891" y="381.34" text-anchor="end" font-size="11" fill="#1b1a19">鹿児島</text>
<text x="891" y="387.41" text-anchor="end" font-size="11" fill="#1b1a19">鹿児島</text>
<text x="891" y="393.48" text-anchor="end" font-size="11" fill="#1b1a19">鹿児島</text>
<text x="891" y="399.55" text-anchor="end" font-size="11" fill="#1b1a19">鹿児島</text>
<text x="891" y="405.62" text-anchor="end" font-size="11" fill="#1b1a19">鹿児島</text>
<text x="891" y="411.69" text-anchor="end" font-size="11" fill="#1b1a19">鹿児島</text>
<text x="891" y="417.76" text-anchor="end" font-size="11" fill="#1b1a19">鹿児島</text>
<text x="891" y="423.83" text-anchor="end" font-size="11" fill="#1b1a19">鹿児島</text>
<text x="891" y="429.90" text-anchor="end" font-size="11" fill="#1b1a19">鹿児島</text>
<text x="891" y="435.97" text-anchor="end" font-size="11" fill="#1b1a19">鹿児島</text>
<text x="891" y="442.04" text-anchor="end" font-size="11" fill="#1b1a19">鹿児島</text>
<text x="891" y="448.11" text-anchor="end" font-size="11" fill="#1b1a19">鹿児島</text>
<text x="891" y="454.18" text-anchor="end" font-size="11" fill="#1b1a19">鹿児島</text>
<text x="891" y="460.25" text-anchor="end" font-size="11" fill="#1b1a19">鹿児島</text>
<text x="891" y="466.32" text-anchor="end" font-size="11" fill="#1b1a19">鹿児島</text>
<text x="891" y="472.39" text-anchor="end" font-size="11" fill="#1b1a19">鹿児島</text>
<text x="891" y="478.46" text-anchor="end" font-size="11" fill="#1b1a19">鹿児島</text>
<text x="891" y="484.53" text-anchor="end" font-size="11" fill="#1b1a19">鹿児島</text>
<text x="891" y="490.60" text-anchor="end" font-size="11" fill="#1b1a19">鹿児島</text>
<text x="891" y="496.67" text-anchor="end" font-size="11" fill="#1b1a19">鹿児島</text>
<text x="891" y="502.74" text-anchor="end" font-size="11" fill="#1b1a19">鹿児島</text>
<text x="891" y="508.81" text-anchor="end" font-size="11" fill="#1b1a19">鹿児島</text>
<text x="891" y="514.88" text-anchor="end" font-size="11" fill="#1b1a19">鹿児島</text>
<text x="891" y="520.95" text-anchor="end" font-size="11" fill="#1b1a19">鹿児島</text>
<text x="891" y="527.02" text-anchor="end" font-size="11" fill="#1b1a19">鹿児島</text>
<text x="891" y="533.09" text-anchor="end" font-size="11" fill="#1b1a19">鹿児島</text>
<text x="891" y="539.16" text-anchor="end" font-size="11" fill="#1b1a19">鹿児島</text>
<text x="891" y="545.23" text-anchor="end" font-size="11" fill="#1b1a19">鹿児島</text>
<text x="891" y="551.30" text-anchor="end" font-size="11" fill="#1b1a19">鹿児島</text>
<text x="891" y="557.37" text-anchor="end" font-size="11" fill="#1b1a19">鹿児島</text>
<text x="891" y="563.44" text-anchor="end" font-size="11" fill="#1b1a19">鹿児島</text>
<text x="891" y="569.51" text-anchor="end" font-size="11" fill="#1b1a19">鹿児島</text>
<text x="891" y="575.58" text-anchor="end" font-size="11" fill="#1b1a19">鹿児島</text>
<text x="891" y="581.65" text-anchor="end" font-size="11" fill="#1b1a19">鹿児島</text>
<text x="891" y="587.72" text-anchor="end" font-size="11" fill="#1b1a19">鹿児島</text>
<text x="891" y="593.79" text-anchor="end" font-size="11" fill="#1b1a19">鹿児島</text>
<text x="891" y="599.86" text-anchor="end" font-size="11" fill="#1b1a19">鹿児島</text>
<text x="891" y="605.93" text-anchor="end" font-size="11" fill="#1b1a19">鹿児島</text>
<text x="891" y="612.00" text-anchor="end" font-size="11" fill="#1b1a19">鹿児島</text>
<text x="891" y="618.07" text-anchor="end" font-size="11" fill="#1b1a19">鹿児島</text>
<text x="891" y="624.14" text-anchor="end" font-size="11" fill="#1b1a19">鹿児島</text>
<text x="891" y="630.21" text-anchor="end" font-size="11" fill="#1b1a19">鹿児島</text>
<text x="891" y="636.28" text-anchor="end" font-size="11" fill="#1b1a19">鹿児島</text>
<text x="891" y="642.35" text-anchor="end" font-size="11" fill="#1b1a19">鹿児島</text>
<text x="891" y="648.42" text-anchor="end" font-size="11" fill="#1b1a19">鹿児島</text>
<text x="891" y="654.49" text-anchor="end" font-size="11" fill="#1b1a19">鹿児島</text>
<text x="891" y="660.56" text-anchor="end" font-size="11" fill="#1b1a19">鹿児島</text>
<text x="891" y="666.63" text-anchor="end" font-size="11" fill="#1b1a19">鹿児島</text>
<text x="891" y="672.70" text-anchor="end" font-size="11" fill="#1b1a19">鹿児島</text>
<text x="891" y="678.77" text-anchor="end" font-size="11" fill="#1b1a19">鹿児島</text>
<text x="891" y="684.84" text-anchor="end" font-size="11" fill="#1b1a19">鹿児島</text>
<text x="891" y="690.91" text-anchor="end" font-size="11" fill="#1b1a19">鹿児島</text>
<text x="891" y="696.98" text-anchor="end" font-size="11" fill="#1b1a19">鹿児島</text>
<text x="891" y="703.05" text-anchor="end" font-size="11" fill="#1b1a19">鹿児島</text>
<text x="891" y="709.12" text-anchor="end" font-size="11" fill="#1b1a19">鹿児島</text>
<text x="891" y="715.19" text-anchor="end" font-size="11" fill="#1b1a19">鹿児島</text>
<text x="891" y="721.26" text-anchor="end" font-size="11" fill="#1b1a19">鹿児島</text>
<text x="891" y="727.33" text-anchor="end" font-size="11" fill="#1b1a19">鹿児島</text>
<text x="891" y="733.40" text-anchor="end" font-size="11" fill="#1b1a19">鹿児島</text>
<rect x="900" y="290" width="21" height="450" fill="#b0c4de"/>
<path d="M900.5 300.50A10 10 0 0 0 920.5 300.50" fill="none" stroke="#d9a891" stroke-width="0.5"/>
<path d="M900.5 306.57A10 10 0 0 0 920.5 306.57" fill="none" stroke="#d9a891" stroke-width="0.5"/>
<path d="M900.5 312.64A10 10 0 0 0 920.5 312.64" fill="none" stroke="#d9a891" stroke-width="0.5"/>
<path d="M900.5 318.71A10 10 0 0 0 920.5 318.71" fill="none" stroke="#d9a891" stroke-width="0.5"/>
<path d="M900.5 324.78A10 10 0 0 0 920.5 324.78" fill="none" stroke="#d9a891" stroke-width="0.5"/>
<path d="M900.5 330.85A10 10 0 0 0 920.5 330.85" fill="none" stroke="#d9a891" stroke-width="0.5"/>
<path d="M900.5 336.92A10 10 0 0 0 920.5 336.92" fill="none" stroke="#d9a891" stroke-width="0.5"/>
<path d="M900.5 342.99A10 10 0 0 0 920.5 342.99" fill="none" stroke="#d9a891" stroke-width="0.5"/>
<path d="M900.5 349.06A10 10 0 0 0 920.5 349.06" fill="none" stroke="#d9a891" stroke-width="0.5"/>
<path d="M900.5 355.13A10 10 0 0 0 920.5 355.13" fill="none" stroke="#d9a891" stroke-width="0.5"/>
<path d="M900.5 361.20A10 10 0 0 0 920.5 361.20" fill="none" stroke="#d9a891" stroke-width="0.5"/>
<path d="M900.5 367.27A10 10 0 0 0 920.5 367.27" fill="none" stroke="#d9a891" stroke-width="0.5"/>
<path d="M900.5 373.34A10 10 0 0 0 920.5 373.34" fill="none" stroke="#d9a891" stroke-width="0.5"/>
<path d="M900.5 379.41A10 10 0 0 0 920.5 379.41" fill="none" stroke="#d9a891" stroke-width="0.5"/>
<path d="M900.5 385.48A10 10 0 0 0 920.5 385.48" fill="none" stroke="#d9a891" stroke-width="0.5"/>
<path d="M900.5 391.55A10 10 0 0 0 920.5 391.55" fill="none" stroke="#d9a891" stroke-width="0.5"/>
<path d="M900.5 397.62A10 10 0 0 0 920.5 397.62" fill="none" stroke="#d9a891" stroke-width="0.5"/>
<path d="M900.5 403.69A10 10 0 0 0 920.5 403.69" fill="none" stroke="#d9a891" stroke-width="0.5"/>
<path d="M900.5 409.76A10 10 0 0 0 920.5 409.76" fill="none" stroke="#d9a891" stroke-width="0.5"/>
<path d="M900.5 415.83A10 10 0 0 0 920.5 415.83" fill="none" stroke="#d9a891" stroke-width="0.5"/>
<path d="M900.5 421.90A10 10 0 0 0 920.5 421.90" fill="none" stroke="#d9a891" stroke-width="0.5"/>
<path d="M900.5 427.97A10 10 0 0 0 920.5 427.97" fill="none" stroke="#d9a891" stroke-width="0.5"/>
<path d="M900.5 434.04A10 10 0 0 0 920.5 434.04" fill="none" stroke="#d9a891" stroke-width="0.5"/>
<path d="M900.5 440.11A10 10 0 0 0 920.5 440.11" fill="none" stroke="#d9a891" stroke-width="0.5"/>
<path d="M900.5 446.18A10 10 0 0 0 920.5 446.18" fill="none" stroke="#d9a891" stroke-width="0.5"/>
<path d="M900.5 452.25A10 10 0 0 0 920.5 452.25" fill="none" stroke="#d9a891" stroke-width="0.5"/>
<path d="M900.5 458.32A10 10 0 0 0 920.5 458.32" fill="none" stroke="#d9a891" stroke-width="0.5"/>
<path d="M900.5 464.39A10 10 0 0 0 920.5 464.39" fill="none" stroke="#d9a891" stroke-width="0.5"/>
<path d="M900.5 470.46A10 10 0 0 0 920.5 470.46" fill="none" stroke="#d9a891" stroke-width="0.5"/>
<path d="M900.5 476.53A10 10 0 0 0 920.5 476.53" fill="none" stroke="#d9a891" stroke-width="0.5"/>
<path d="M900.5 482.60A10 10 0 0 0 920.5 482.60" fill="none" stroke="#d9a891" stroke-width="0.5"/>
<path d="M900.5 488.67A10 10 0 0 0 920.5 488.67" fill="none" stroke="#d9a891" stroke-width="0.5"/>
<path d="M900.5 494.74A10 10 0 0 0 920.5 494.74" fill="none" stroke="#d9a891" stroke-width="0.5"/>
<path d="M900.5 500.81A10 10 0 0 0 920.5 500.81" fill="none" stroke="#d9a891" stroke-width="0.5"/>
<path d="M900.5 506.88A10 10 0 0 0 920.5 506.88" fill="none" stroke="#d9a891" stroke-width="0.5"/>
<path d="M900.5 512.95A10 10 0 0 0 920.5 512.95" fill="none" stroke="#d9a891" stroke-width="0.5"/>
<path d="M900.5 519.02A10 10 0 0 0 920.5 519.02" fill="none" stroke="#d9a891" stroke-width="0.5"/>
<path d="M900.5 525.09A10 10 0 0 0 920.5 525.09" fill="none" stroke="#d9a891" stroke-width="0.5"/>
<path d="M900.5 531.16A10 10 0 0 0 920.5 531.16" fill="none" stroke="#d9a891" stroke-width="0.5"/>
<path d="M900.5 537.23A10 10 0 0 0 920.5 537.23" fill="none" stroke="#d9a891" stroke-width="0.5"/>
<path d="M900.5 543.30A10 10 0 0 0 920.5 543.30" fill="none" stroke="#d9a891" stroke-width="0.5"/>
<path d="M900.5 549.37A10 10 0 0 0 920.5 549.37" fill="none" stroke="#d9a891" stroke-width="0.5"/>
<path d="M900.5 555.44A10 10 0 0 0 920.5 555.44" fill="none" stroke="#d9a891" stroke-width="0.5"/>
<path d="M900.5 561.51A10 10 0 0 0 920.5 561.51" fill="none" stroke="#d9a891" stroke-width="0.5"/>
<path d="M900.5 567.58A10 10 0 0 0 920.5 567.58" fill="none" stroke="#d9a891" stroke-width="0.5"/>
<path d="M900.5 573.65A10 10 0 0 0 920.5 573.65" fill="none" stroke="#d9a891" stroke-width="0.5"/>
<path d="M900.5 579.72A10 10 0 0 0 920.5 579.72" fill="none" stroke="#d9a891" stroke-width="0.5"/>
<path d="M900.5 585.79A10 10 0 0 0 920.5 585.79" fill="none" stroke="#d9a891" stroke-width="0.5"/>
<path d="M900.5 591.86A10 10 0 0 0 920.5 591.86" fill="none" stroke="#d9a891" stroke-width="0.5"/>
<path d="M900.5 597.93A10 10 0 0 0 920.5 597.93" fill="none" stroke="#d9a891" stroke-width="0.5"/>
<path d="M900.5 604.00A10 10 0 0 0 920.5 604.00" fill="none" stroke="#d9a891" stroke-width="0.5"/>
<path d="M900.5 610.07A10 10 0 0 0 920.5 610.07" fill="none" stroke="#d9a891" stroke-width="0.5"/>
<path d="M900.5 616.14A10 10 0 0 0 920.5 616.14" fill="none" stroke="#d9a891" stroke-width="0.5"/>
<path d="M900.5 622.21A10 10 0 0 0 920.5 622.21" fill="none" stroke="#d9a891" stroke-width="0.5"/>
<path d="M900.5 628.28A10 10 0 0 0 920.5 628.28" fill="none" stroke="#d9a891" stroke-width="0.5"/>
<path d="M900.5 634.35A10 10 0 0 0 920.5 634.35" fill="none" stroke="#d9a891" stroke-width="0.5"/>
<path d="M900.5 640.42A10 10 0 0 0 920.5 640.42" fill="none" stroke="#d9a891" stroke-width="0.5"/>
<path d="M900.5 646.49A10 10 0 0 0 920.5 646.49" fill="none" stroke="#d9a891" stroke-width="0.5"/>
<path d="M900.5 652.56A10 10 0 0 0 920.5 652.56" fill="none" stroke="#d9a891" stroke-width="0.5"/>
<path d="M900.5 658.63A10 10 0 0 0 920.5 658.63" fill="none" stroke="#d9a891" stroke-width="0.5"/>
<path d="M900.5 664.70A10 10 0 0 0 920.5 664.70" fill="none" stroke="#d9a891" stroke-width="0.5"/>
<path d="M900.5 670.77A10 10 0 0 0 920.5 670.77" fill="none" stroke="#d9a891" stroke-width="0.5"/>
<path d="M900.5 676.84A10 10 0 0 0 920.5 676.84" fill="none" stroke="#d9a891" stroke-width="0.5"/>
<path d="M900.5 682.91A10 10 0 0 0 920.5 682.91" fill="none" stroke="#d9a891" stroke-width="0.5"/>
<path d="M900.5 688.98A10 10 0 0 0 920.5 688.98" fill="none" stroke="#d9a891" stroke-width="0.5"/>
<path d="M900.5 695.05A10 10 0 0 0 920.5 695.05" fill="none" stroke="#d9a891" stroke-width="0.5"/>
<path d="M900.5 701.12A10 10 0 0 0 920.5 701.12" fill="none" stroke="#d9a891" stroke-width="0.5"/>
<path d="M900.5 707.19A10 10 0 0 0 920.5 707.19" fill="none" stroke="#d9a891" stroke-width="0.5"/>
<path d="M900.5 713.26A10 10 0 0 0 920.5 713.26" fill="none" stroke="#d9a891" stroke-width="0.5"/>
<path d="M900.5 719.33A10 10 0 0 0 920.5 719.33" fill="none" stroke="#d9a891" stroke-width="0.5"/>
<path d="M900.5 725.40A10 10 0 0 0 920.5 725.40" fill="none" stroke="#d9a891" stroke-width="0.5"/>
<text x="958" y="308.50" text-anchor="end" font-size="10.5" fill="#605e5c">0.06 M</text>
<text x="958" y="314.57" text-anchor="end" font-size="10.5" fill="#605e5c">1.01 k</text>
<text x="958" y="320.64" text-anchor="end" font-size="10.5" fill="#605e5c">209</text>
<text x="958" y="326.71" text-anchor="end" font-size="10.5" fill="#605e5c">203</text>
<text x="958" y="332.78" text-anchor="end" font-size="10.5" fill="#605e5c">132</text>
<text x="958" y="338.85" text-anchor="end" font-size="10.5" fill="#605e5c">132</text>
<text x="958" y="344.92" text-anchor="end" font-size="10.5" fill="#605e5c">127</text>
<text x="958" y="350.99" text-anchor="end" font-size="10.5" fill="#605e5c">89</text>
<text x="958" y="357.06" text-anchor="end" font-size="10.5" fill="#605e5c">0.05 M</text>
<text x="958" y="363.13" text-anchor="end" font-size="10.5" fill="#605e5c">1.39 k</text>
<text x="958" y="369.20" text-anchor="end" font-size="10.5" fill="#605e5c">220</text>
<text x="958" y="375.27" text-anchor="end" font-size="10.5" fill="#605e5c">160</text>
<text x="958" y="381.34" text-anchor="end" font-size="10.5" fill="#605e5c">139</text>
<text x="958" y="387.41" text-anchor="end" font-size="10.5" fill="#605e5c">12.7 k</text>
<text x="958" y="393.48" text-anchor="end" font-size="10.5" fill="#605e5c">2.97 k</text>
<text x="958" y="399.55" text-anchor="end" font-size="10.5" fill="#605e5c">809</text>
<text x="958" y="405.62" text-anchor="end" font-size="10.5" fill="#605e5c">172</text>
<text x="958" y="411.69" text-anchor="end" font-size="10.5" fill="#605e5c">133</text>
<text x="958" y="417.76" text-anchor="end" font-size="10.5" fill="#605e5c">133</text>
<text x="958" y="423.83" text-anchor="end" font-size="10.5" fill="#605e5c">0.01 M</text>
<text x="958" y="429.90" text-anchor="end" font-size="10.5" fill="#605e5c">2.79 k</text>
<text x="958" y="435.97" text-anchor="end" font-size="10.5" fill="#605e5c">411</text>
<text x="958" y="442.04" text-anchor="end" font-size="10.5" fill="#605e5c">382</text>
<text x="958" y="448.11" text-anchor="end" font-size="10.5" fill="#605e5c">347</text>
<text x="958" y="454.18" text-anchor="end" font-size="10.5" fill="#605e5c">200</text>
<text x="958" y="460.25" text-anchor="end" font-size="10.5" fill="#605e5c">199</text>
<text x="958" y="466.32" text-anchor="end" font-size="10.5" fill="#605e5c">758</text>
<text x="958" y="472.39" text-anchor="end" font-size="10.5" fill="#605e5c">551</text>
<text x="958" y="478.46" text-anchor="end" font-size="10.5" fill="#605e5c">524</text>
<text x="958" y="484.53" text-anchor="end" font-size="10.5" fill="#605e5c">283</text>
<text x="958" y="490.60" text-anchor="end" font-size="10.5" fill="#605e5c">688</text>
<text x="958" y="496.67" text-anchor="end" font-size="10.5" fill="#605e5c">135</text>
<text x="958" y="502.74" text-anchor="end" font-size="10.5" fill="#605e5c">130</text>
<text x="958" y="508.81" text-anchor="end" font-size="10.5" fill="#605e5c">103</text>
<text x="958" y="514.88" text-anchor="end" font-size="10.5" fill="#605e5c">617</text>
<text x="958" y="520.95" text-anchor="end" font-size="10.5" fill="#605e5c">500</text>
<text x="958" y="527.02" text-anchor="end" font-size="10.5" fill="#605e5c">479</text>
<text x="958" y="533.09" text-anchor="end" font-size="10.5" fill="#605e5c">152</text>
<text x="958" y="539.16" text-anchor="end" font-size="10.5" fill="#605e5c">459</text>
<text x="958" y="545.23" text-anchor="end" font-size="10.5" fill="#605e5c">297</text>
<text x="958" y="551.30" text-anchor="end" font-size="10.5" fill="#605e5c">188</text>
<text x="958" y="557.37" text-anchor="end" font-size="10.5" fill="#605e5c">424</text>
<text x="958" y="563.44" text-anchor="end" font-size="10.5" fill="#605e5c">96</text>
<text x="958" y="569.51" text-anchor="end" font-size="10.5" fill="#605e5c">395</text>
<text x="958" y="575.58" text-anchor="end" font-size="10.5" fill="#605e5c">139</text>
<text x="958" y="581.65" text-anchor="end" font-size="10.5" fill="#605e5c">395</text>
<text x="958" y="587.72" text-anchor="end" font-size="10.5" fill="#605e5c">249</text>
<text x="958" y="593.79" text-anchor="end" font-size="10.5" fill="#605e5c">72</text>
<text x="958" y="599.86" text-anchor="end" font-size="10.5" fill="#605e5c">374</text>
<text x="958" y="605.93" text-anchor="end" font-size="10.5" fill="#605e5c">264</text>
<text x="958" y="612.00" text-anchor="end" font-size="10.5" fill="#605e5c">274</text>
<text x="958" y="618.07" text-anchor="end" font-size="10.5" fill="#605e5c">207</text>
<text x="958" y="624.14" text-anchor="end" font-size="10.5" fill="#605e5c">359</text>
<text x="958" y="630.21" text-anchor="end" font-size="10.5" fill="#605e5c">351</text>
<text x="958" y="636.28" text-anchor="end" font-size="10.5" fill="#605e5c">191</text>
<text x="958" y="642.35" text-anchor="end" font-size="10.5" fill="#605e5c">160</text>
<text x="958" y="648.42" text-anchor="end" font-size="10.5" fill="#605e5c">130</text>
<text x="958" y="654.49" text-anchor="end" font-size="10.5" fill="#605e5c">305</text>
<text x="958" y="660.56" text-anchor="end" font-size="10.5" fill="#605e5c">294</text>
<text x="958" y="666.63" text-anchor="end" font-size="10.5" fill="#605e5c">253</text>
<text x="958" y="672.70" text-anchor="end" font-size="10.5" fill="#605e5c">248</text>
<text x="958" y="678.77" text-anchor="end" font-size="10.5" fill="#605e5c">124</text>
<text x="958" y="684.84" text-anchor="end" font-size="10.5" fill="#605e5c">232</text>
<text x="958" y="690.91" text-anchor="end" font-size="10.5" fill="#605e5c">161</text>
<text x="958" y="696.98" text-anchor="end" font-size="10.5" fill="#605e5c">229</text>
<text x="958" y="703.05" text-anchor="end" font-size="10.5" fill="#605e5c">146</text>
<text x="958" y="709.12" text-anchor="end" font-size="10.5" fill="#605e5c">108</text>
<text x="958" y="715.19" text-anchor="end" font-size="10.5" fill="#605e5c">92</text>
<text x="958" y="721.26" text-anchor="end" font-size="10.5" fill="#605e5c">72</text>
<text x="958" y="727.33" text-anchor="end" font-size="10.5" fill="#605e5c">100</text>
<text x="958" y="733.40" text-anchor="end" font-size="10.5" fill="#605e5c">79</text>
<circle cx="398.8" cy="725.3" r="9.8" fill="#1aab40" stroke="#d0d8f0" stroke-width="0.8"/>
<circle cx="398.8" cy="711.2" r="9.8" fill="#6b5a2a" stroke="#d0d8f0" stroke-width="0.8"/>
<circle cx="398.8" cy="697.0" r="9.8" fill="#d4591a" stroke="#d0d8f0" stroke-width="0.8"/>
<circle cx="398.8" cy="692.5" r="9.8" fill="#1f9a8a" stroke="#d0d8f0" stroke-width="0.8"/>
<circle cx="398.8" cy="683.3" r="9.8" fill="#ff4a4a" stroke="#d0d8f0" stroke-width="0.8"/>
<circle cx="398.8" cy="670.9" r="9.8" fill="#9a7412" stroke="#d0d8f0" stroke-width="0.8"/>
<circle cx="398.8" cy="662.0" r="9.8" fill="#5b3a8f" stroke="#d0d8f0" stroke-width="0.8"/>
<circle cx="398.8" cy="652.8" r="9.8" fill="#e6008c" stroke="#d0d8f0" stroke-width="0.8"/>
<circle cx="398.8" cy="634.8" r="9.8" fill="#ff6300" stroke="#d0d8f0" stroke-width="0.8"/>
<circle cx="398.8" cy="620.0" r="9.8" fill="#4668c5" stroke="#d0d8f0" stroke-width="0.8"/>
<circle cx="398.8" cy="604.0" r="9.8" fill="#0d8ad6" stroke="#d0d8f0" stroke-width="0.8"/>
<circle cx="398.8" cy="583.3" r="9.8" fill="#5cd46a" stroke="#d0d8f0" stroke-width="0.8"/>
<circle cx="398.8" cy="567.9" r="9.8" fill="#1fd6b6" stroke="#d0d8f0" stroke-width="0.8"/>
<circle cx="398.8" cy="556.0" r="9.8" fill="#ff8080" stroke="#d0d8f0" stroke-width="0.8"/>
<circle cx="398.8" cy="540.7" r="9.8" fill="#c4a000" stroke="#d0d8f0" stroke-width="0.8"/>
<circle cx="398.8" cy="522.6" r="9.8" fill="#f075d0" stroke="#d0d8f0" stroke-width="0.8"/>
<circle cx="398.8" cy="510.5" r="9.8" fill="#ffa058" stroke="#d0d8f0" stroke-width="0.8"/>
<circle cx="398.8" cy="495.2" r="9.8" fill="#15c6f4" stroke="#d0d8f0" stroke-width="0.8"/>
<path d="M398.8 495.2L398.8 485.4A9.8 9.8 0 0 1 399.31 485.41z" fill="#b0c4de"/>
<circle cx="398.8" cy="470.7" r="9.8" fill="#197278" stroke="#d0d8f0" stroke-width="0.8"/>
<path d="M398.8 470.7L398.8 460.9A9.8 9.8 0 0 1 399.65 460.94z" fill="#b0c4de"/>
<circle cx="398.8" cy="437.4" r="9.8" fill="#744ec2" stroke="#d0d8f0" stroke-width="0.8"/>
<path d="M398.8 437.4L398.8 427.59999999999997A9.8 9.8 0 0 1 403.70 428.91z" fill="#b0c4de"/>
<circle cx="398.8" cy="398.0" r="9.8" fill="#e044a7" stroke="#d0d8f0" stroke-width="0.8"/>
<path d="M398.8 398.0L398.8 388.2A9.8 9.8 0 0 1 405.10 390.49z" fill="#b0c4de"/>
<circle cx="398.8" cy="365.3" r="9.8" fill="#6b007b" stroke="#d0d8f0" stroke-width="0.8"/>
<path d="M398.8 365.3L398.8 355.5A9.8 9.8 0 0 1 406.31 371.60z" fill="#b0c4de"/>
<circle cx="398.8" cy="325.8" r="9.8" fill="#118dff" stroke="#d0d8f0" stroke-width="0.8"/>
<path d="M398.8 325.8L398.8 316.0A9.8 9.8 0 0 1 405.10 333.31z" fill="#b0c4de"/>
<text x="378" y="329.8" text-anchor="end" font-size="11" fill="#605e5c">香港</text>
<rect x="408.7" y="320.8" width="39.8" height="10" fill="#fff" fill-opacity="0.55"/>
<text x="448" y="329.8" text-anchor="end" font-size="11" fill="#3b3a39">0.06 M</text>
<text x="378" y="369.3" text-anchor="end" font-size="11" fill="#605e5c">韓国</text>
<rect x="408.7" y="360.3" width="39.8" height="10" fill="#fff" fill-opacity="0.55"/>
<text x="448" y="369.3" text-anchor="end" font-size="11" fill="#3b3a39">0.05 M</text>
<text x="378" y="402.0" text-anchor="end" font-size="11" fill="#605e5c">台湾</text>
<rect x="408.7" y="393.0" width="39.8" height="10" fill="#fff" fill-opacity="0.55"/>
<text x="448" y="402.0" text-anchor="end" font-size="11" fill="#3b3a39">0.02 M</text>
<text x="378" y="441.4" text-anchor="end" font-size="11" fill="#605e5c">中国</text>
<rect x="408.7" y="432.4" width="39.8" height="10" fill="#fff" fill-opacity="0.55"/>
<text x="448" y="441.4" text-anchor="end" font-size="11" fill="#3b3a39">0.02 M</text>
<text x="378" y="474.7" text-anchor="end" font-size="11" fill="#605e5c">米国</text>
<rect x="408.7" y="465.7" width="39.8" height="10" fill="#fff" fill-opacity="0.55"/>
<text x="448" y="474.7" text-anchor="end" font-size="11" fill="#3b3a39">2.12 k</text>
<text x="378" y="499.2" text-anchor="end" font-size="11" fill="#605e5c">その他ヨーロッパ</text>
<rect x="408.7" y="490.2" width="39.8" height="10" fill="#fff" fill-opacity="0.55"/>
<text x="448" y="499.2" text-anchor="end" font-size="11" fill="#3b3a39">1.08 k</text>
<text x="378" y="514.5" text-anchor="end" font-size="11" fill="#605e5c">タイ</text>
<rect x="427.6" y="505.5" width="20.9" height="10" fill="#fff" fill-opacity="0.55"/>
<text x="448" y="514.5" text-anchor="end" font-size="11" fill="#3b3a39">617</text>
<text x="378" y="526.6" text-anchor="end" font-size="11" fill="#605e5c">フィリピン</text>
<rect x="408.7" y="517.6" width="39.8" height="10" fill="#fff" fill-opacity="0.55"/>
<text x="448" y="526.6" text-anchor="end" font-size="11" fill="#3b3a39">1.12 k</text>
<text x="378" y="544.7" text-anchor="end" font-size="11" fill="#605e5c">その他アジア</text>
<rect x="427.6" y="535.7" width="20.9" height="10" fill="#fff" fill-opacity="0.55"/>
<text x="448" y="544.7" text-anchor="end" font-size="11" fill="#3b3a39">944</text>
<text x="378" y="560.0" text-anchor="end" font-size="11" fill="#605e5c">その他オセアニア</text>
<rect x="427.6" y="551.0" width="20.9" height="10" fill="#fff" fill-opacity="0.55"/>
<text x="448" y="560.0" text-anchor="end" font-size="11" fill="#3b3a39">520</text>
<text x="378" y="571.9" text-anchor="end" font-size="11" fill="#605e5c">シンガポール</text>
<rect x="427.6" y="562.9" width="20.9" height="10" fill="#fff" fill-opacity="0.55"/>
<text x="448" y="571.9" text-anchor="end" font-size="11" fill="#3b3a39">554</text>
<text x="378" y="587.3" text-anchor="end" font-size="11" fill="#605e5c">マレーシア</text>
<rect x="427.6" y="578.3" width="20.9" height="10" fill="#fff" fill-opacity="0.55"/>
<text x="448" y="587.3" text-anchor="end" font-size="11" fill="#3b3a39">716</text>
<text x="378" y="608.0" text-anchor="end" font-size="11" fill="#605e5c">豪州</text>
<rect x="408.7" y="599.0" width="39.8" height="10" fill="#fff" fill-opacity="0.55"/>
<text x="448" y="608.0" text-anchor="end" font-size="11" fill="#3b3a39">1.14 k</text>
<text x="378" y="624.0" text-anchor="end" font-size="11" fill="#605e5c">英国</text>
<rect x="427.6" y="615.0" width="20.9" height="10" fill="#fff" fill-opacity="0.55"/>
<text x="448" y="624.0" text-anchor="end" font-size="11" fill="#3b3a39">359</text>
<text x="378" y="638.8" text-anchor="end" font-size="11" fill="#605e5c">カナダ</text>
<rect x="427.6" y="629.8" width="20.9" height="10" fill="#fff" fill-opacity="0.55"/>
<text x="448" y="638.8" text-anchor="end" font-size="11" fill="#3b3a39">832</text>
<text x="378" y="656.8" text-anchor="end" font-size="11" fill="#605e5c">南アメリカ</text>
<rect x="427.6" y="647.8" width="20.9" height="10" fill="#fff" fill-opacity="0.55"/>
<text x="448" y="656.8" text-anchor="end" font-size="11" fill="#3b3a39">599</text>
<text x="378" y="666.0" text-anchor="end" font-size="11" fill="#605e5c">ベトナム</text>
<rect x="427.6" y="657.0" width="20.9" height="10" fill="#fff" fill-opacity="0.55"/>
<text x="448" y="666.0" text-anchor="end" font-size="11" fill="#3b3a39">253</text>
<text x="378" y="674.9" text-anchor="end" font-size="11" fill="#605e5c">インドネシア</text>
<rect x="427.6" y="665.9" width="20.9" height="10" fill="#fff" fill-opacity="0.55"/>
<text x="448" y="674.9" text-anchor="end" font-size="11" fill="#3b3a39">372</text>
<text x="378" y="687.3" text-anchor="end" font-size="11" fill="#605e5c">フランス</text>
<rect x="427.6" y="678.3" width="20.9" height="10" fill="#fff" fill-opacity="0.55"/>
<text x="448" y="687.3" text-anchor="end" font-size="11" fill="#3b3a39">393</text>
<text x="378" y="696.5" text-anchor="end" font-size="11" fill="#605e5c">ドイツ</text>
<rect x="427.6" y="687.5" width="20.9" height="10" fill="#fff" fill-opacity="0.55"/>
<text x="448" y="696.5" text-anchor="end" font-size="11" fill="#3b3a39">229</text>
<text x="378" y="701.0" text-anchor="end" font-size="11" fill="#605e5c">アフリカ</text>
<rect x="427.6" y="692.0" width="20.9" height="10" fill="#fff" fill-opacity="0.55"/>
<text x="448" y="701.0" text-anchor="end" font-size="11" fill="#3b3a39">146</text>
<text x="378" y="715.2" text-anchor="end" font-size="11" fill="#605e5c">インド</text>
<rect x="427.6" y="706.2" width="20.9" height="10" fill="#fff" fill-opacity="0.55"/>
<text x="448" y="715.2" text-anchor="end" font-size="11" fill="#3b3a39">272</text>
<text x="378" y="729.3" text-anchor="end" font-size="11" fill="#605e5c">イタリア</text>
<rect x="427.6" y="720.3" width="20.9" height="10" fill="#fff" fill-opacity="0.55"/>
<text x="448" y="729.3" text-anchor="end" font-size="11" fill="#3b3a39">179</text>
<circle cx="143" cy="526.2" r="9.8" fill="#fff" stroke="#9db9e0" stroke-width="0.9"/>
<text x="110" y="530.0" font-size="10" fill="#605e5c">All</text>
<rect x="156" y="521.6" width="36" height="9.5" fill="#fff" fill-opacity="0.55"/>
<text x="157" y="530.1" font-size="11" fill="#3b3a39">0.16 M</text></svg>

<!-- ================= FILTER STRIP ================= -->
<div class="a" style="left:1044px;top:127px;width:1px;height:666px;background:#8a8886"></div>
<div class="a" style="left:1045px;top:127px;width:33px;height:631px;background:#fff;border-right:1px solid #e1dfdd"></div>
<svg style="left:1055px;top:139px" width="13" height="12" viewBox="0 0 13 12"><path d="M6 1L1 6l5 5M12 1L7 6l5 5" fill="none" stroke="#252423" stroke-width="1.2"/></svg>
<svg style="left:1058px;top:168px" width="13" height="13" viewBox="0 0 13 13"><path d="M11.5 1v11L6.5 7.2H1.2V5.8H6.5z" fill="none" stroke="#252423" stroke-width="1.2" stroke-linejoin="round"/></svg>
<div class="t" style="left:1023px;top:220px;width:82px;height:18px;font-size:16px;line-height:18px;transform:rotate(90deg);text-align:left;color:#252423;font-weight:bold">フィルター</div>


<!-- ================= VIZ PANE ================= -->
<div class="a" style="left:1078px;top:127px;width:181px;height:666px;background:#f3f2f1;border-right:1px solid #d2d0ce"></div>
<div class="t" style="left:1087px;top:137px;font-size:15px;font-weight:bold">視覚化</div>
<svg style="left:1237px;top:141px" width="13" height="12" viewBox="0 0 13 12"><path d="M1 1l5 5-5 5M7 1l5 5-5 5" fill="none" stroke="#252423" stroke-width="1.2"/></svg>
<div class="t" style="left:1087px;top:168px;font-size:12px;font-weight:bold;color:#323130">ビジュアルのビルド</div>
<div class="a" style="left:1086px;top:188px;width:32px;height:32px;background:#d9d8d7;border-radius:3px"></div>
<svg style="left:1089px;top:191px" width="26" height="26" viewBox="0 0 26 26"><path d="M4 2.5h19" stroke="#323130" stroke-width="1"/><rect x="4" y="6" width="19" height="7" fill="#117865" stroke="#252423" stroke-dasharray="1.5 1" stroke-width="1"/><rect x="4" y="16" width="19" height="7" fill="#117865" stroke="#252423" stroke-dasharray="1.5 1" stroke-width="1"/></svg>
<svg style="left:1155px;top:191px" width="27" height="26" viewBox="0 0 27 26"><path d="M4 24H1.5V1.5H11l5 5v4" fill="none" stroke="#252423" stroke-width="1.1"/><path d="M11 1.5v5h5" fill="none" stroke="#252423"/><path d="M11 23c3 0 5-1 6-4l8-9" fill="none" stroke="#252423" stroke-width="1.1"/><path d="M8 24c3 0 6 0 8-3s-1-4-3-3-2 3-5 6z" fill="#fff" stroke="#252423" stroke-width="1"/></svg>
<svg style="left:1078px;top:223px" width="180" height="11" viewBox="0 0 180 11"><path d="M0 9.5h16l8-8 8 8h148" fill="none" stroke="#8a8886" stroke-width="1"/></svg>
<svg style="left:1089px;top:243px" width="20" height="20" viewBox="0 0 20 20"><path d="M1.5 1v17.5H19" fill="none" stroke="#323130"/><rect x="1.5" y="3.5" width="5" height="4" fill="#fff" stroke="#323130" stroke-width=".8"/><rect x="6.5" y="3.5" width="5" height="4" fill="#77b7f2" stroke="#118dff" stroke-width=".8"/><rect x="1.5" y="11.5" width="7" height="4" fill="#fff" stroke="#323130" stroke-width=".8"/><rect x="8.5" y="11.5" width="8" height="4" fill="#c8c6c4" stroke="#a19f9d" stroke-width=".8"/></svg>
<svg style="left:1117px;top:243px" width="20" height="20" viewBox="0 0 20 20"><path d="M1.5 1v17.5H19" fill="none" stroke="#323130"/><rect x="4.5" y="11" width="4" height="7" fill="#fff" stroke="#323130" stroke-width=".8"/><rect x="4.5" y="5.5" width="4" height="5.5" fill="#77b7f2" stroke="#118dff" stroke-width=".8"/><rect x="12.5" y="9" width="4" height="9" fill="#fff" stroke="#323130" stroke-width=".8"/><rect x="12.5" y="2.5" width="4" height="6.5" fill="#c8c6c4" stroke="#a19f9d" stroke-width=".8"/></svg>
<svg style="left:1145px;top:243px" width="20" height="20" viewBox="0 0 20 20"><path d="M1.5 1v17.5H19" fill="none" stroke="#323130" stroke-width="1.5"/><rect x="2" y="2" width="15" height="3.5" fill="#77b7f2" stroke="#118dff" stroke-width=".8"/><rect x="2" y="6.5" width="9" height="3" fill="#fff" stroke="#323130" stroke-width=".8"/><rect x="2" y="10.5" width="6" height="3" fill="#c8c6c4" stroke="#a19f9d" stroke-width=".8"/><rect x="2" y="14.5" width="11" height="3" fill="#fff" stroke="#323130" stroke-width=".8"/></svg>
<svg style="left:1173px;top:243px" width="20" height="20" viewBox="0 0 20 20"><path d="M1.5 1v17.5H19" fill="none" stroke="#323130" stroke-width="1.5"/><rect x="2" y="2" width="4" height="16" fill="#77b7f2" stroke="#118dff" stroke-width=".8"/><rect x="6.5" y="9" width="3" height="9" fill="#fff" stroke="#323130" stroke-width=".8"/><rect x="10.5" y="12" width="3" height="6" fill="#c8c6c4" stroke="#a19f9d" stroke-width=".8"/><rect x="14.5" y="7" width="3" height="11" fill="#fff" stroke="#323130" stroke-width=".8"/></svg>
<svg style="left:1201px;top:243px" width="20" height="20" viewBox="0 0 20 20"><path d="M1.5 1v17.5H19" fill="none" stroke="#323130"/><rect x="1.5" y="3.5" width="4" height="4" fill="#fff" stroke="#323130" stroke-width=".8"/><rect x="5.5" y="3.5" width="11" height="4" fill="#77b7f2" stroke="#118dff" stroke-width=".8"/><rect x="1.5" y="11.5" width="9" height="4" fill="#fff" stroke="#323130" stroke-width=".8"/><rect x="10.5" y="11.5" width="6" height="4" fill="#c8c6c4" stroke="#a19f9d" stroke-width=".8"/></svg>
<svg style="left:1229px;top:243px" width="20" height="20" viewBox="0 0 20 20"><path d="M1.5 1v17.5H19" fill="none" stroke="#323130"/><rect x="4.5" y="14" width="4" height="4" fill="#fff" stroke="#323130" stroke-width=".8"/><rect x="4.5" y="2.5" width="4" height="11.5" fill="#77b7f2" stroke="#118dff" stroke-width=".8"/><rect x="12.5" y="7" width="4" height="11" fill="#fff" stroke="#323130" stroke-width=".8"/><rect x="12.5" y="2.5" width="4" height="4.5" fill="#c8c6c4" stroke="#a19f9d" stroke-width=".8"/></svg>
<svg style="left:1089px;top:271px" width="20" height="20" viewBox="0 0 20 20"><path d="M1.5 1v17.5H19" fill="none" stroke="#323130"/><path d="M1 15l6-7 5 4 6-6" fill="none" stroke="#118dff" stroke-width="1.2"/><path d="M1 11l5-5 5 5 6-7" fill="none" stroke="#323130" stroke-width="1.2"/></svg>
<svg style="left:1117px;top:271px" width="20" height="20" viewBox="0 0 20 20"><path d="M1 18.5h18" fill="none" stroke="#323130"/><path d="M1 13l5-9 6 9 5-10 2 7v9H1z" fill="#c8c6c4" stroke="#a19f9d" stroke-width=".8"/><path d="M1 13l5-9 6 9" fill="#fff" stroke="#323130" stroke-width="1"/><path d="M1 19v-6l5 3 6-4 7 7z" fill="#77b7f2" stroke="#118dff" stroke-width="1"/></svg>
<svg style="left:1145px;top:271px" width="20" height="20" viewBox="0 0 20 20"><path d="M1 18.5h18M1.5 1v18" fill="none" stroke="#323130"/><path d="M1 3l5 5 6-6 6 4v6l-6-4-6 6-5-5z" fill="#77b7f2" stroke="#118dff" stroke-width="1"/></svg>
<svg style="left:1173px;top:271px" width="20" height="20" viewBox="0 0 20 20"><path d="M1 18.5h18M1.5 1v18" fill="none" stroke="#323130"/><path d="M1 3h17v10l-4-4-5 5-8-8z" fill="#77b7f2" stroke="#118dff" stroke-width="1"/></svg>
<svg style="left:1201px;top:271px" width="20" height="20" viewBox="0 0 20 20"><path d="M1.5 1v17.5H19" fill="none" stroke="#323130"/><rect x="4.5" y="3.5" width="4" height="14.5" fill="#77b7f2" stroke="#118dff" stroke-width=".8"/><rect x="12.5" y="3.5" width="4" height="14.5" fill="#c8c6c4" stroke="#a19f9d" stroke-width=".8"/><path d="M1 17l6-5 5 4 7-6" fill="none" stroke="#323130" stroke-width="1.2"/></svg>
<svg style="left:1229px;top:271px" width="20" height="20" viewBox="0 0 20 20"><path d="M1.5 1v17.5H19" fill="none" stroke="#323130"/><rect x="4.5" y="9.5" width="4" height="8.5" fill="#77b7f2" stroke="#118dff" stroke-width=".8"/><rect x="8.5" y="2.5" width="4" height="15.5" fill="#fff" stroke="#323130" stroke-width=".8"/><rect x="12.5" y="6.5" width="4" height="11.5" fill="#c8c6c4" stroke="#a19f9d" stroke-width=".8"/><path d="M1 17l6-5 5 4 7-6" fill="none" stroke="#323130" stroke-width="1.2"/></svg>
<svg style="left:1089px;top:299px" width="20" height="20" viewBox="0 0 20 20"><path d="M1.5 1v17.5H19" fill="none" stroke="#323130"/><path d="M2 3c5 0 5 4 8 4s3-4 8-4v5c-5 0-5 4-8 4s-3-4-8-4z" fill="#a19f9d"/><path d="M2 8c5 0 5 4 8 4s3-4 8-4v5c-5 0-5 4-8 4s-3-4-8-4z" fill="#ff9b3d" stroke="#118dff" stroke-width="1"/></svg>
<svg style="left:1117px;top:299px" width="20" height="20" viewBox="0 0 20 20"><path d="M1.5 1v17.5H19" fill="none" stroke="#323130"/><path d="M3 18V6h4v-4h4v12h3V4h4v14" fill="none" stroke="#323130" stroke-width="1"/></svg>
<svg style="left:1145px;top:299px" width="20" height="20" viewBox="0 0 20 20"><path d="M1 2h18v5H1zM4 8h12v5H4zM7 14h6v5H7z" fill="#77b7f2" stroke="#118dff" stroke-width="1"/></svg>
<svg style="left:1173px;top:299px" width="20" height="20" viewBox="0 0 20 20"><path d="M1.5 1v17.5H19" fill="none" stroke="#323130"/><rect x="5" y="13" width="2" height="2" fill="#323130"/><rect x="14" y="2" width="2" height="2" fill="#323130"/><rect x="8" y="8" width="2" height="2" fill="#77b7f2"/><rect x="11" y="10" width="2" height="2" fill="#77b7f2"/><rect x="4" y="5" width="2" height="2" fill="#77b7f2"/><rect x="13" y="14" width="2" height="2" fill="#77b7f2"/></svg>
<svg style="left:1201px;top:299px" width="20" height="20" viewBox="0 0 20 20"><circle cx="10" cy="10" r="8.5" fill="#fff" stroke="#323130" stroke-width="1.1"/><path d="M10 10V1.5A8.5 8.5 0 0 1 16 16z" fill="#77b7f2" stroke="#118dff" stroke-width="1"/></svg>
<svg style="left:1229px;top:299px" width="20" height="20" viewBox="0 0 20 20"><circle cx="10" cy="10" r="8.5" fill="#77b7f2" stroke="#118dff" stroke-width="1.1"/><circle cx="10" cy="10" r="4.5" fill="#fff" stroke="#118dff" stroke-width="1"/><path d="M10 1.5v4M17 6l-3.5 2" stroke="#fff" stroke-width="1.5"/></svg>
<svg style="left:1089px;top:327px" width="20" height="20" viewBox="0 0 20 20"><rect x="1" y="1" width="18" height="18" fill="#fff" stroke="#323130" stroke-width="1"/><rect x="1.5" y="1.5" width="8" height="8" fill="#77b7f2" stroke="#118dff" stroke-width=".8"/><rect x="1.5" y="10.5" width="8" height="8" fill="#77b7f2" stroke="#118dff" stroke-width=".8"/><path d="M10 7h9M14 7v12M10 13h9" stroke="#323130" stroke-width="1"/></svg>
<svg style="left:1117px;top:327px" width="20" height="20" viewBox="0 0 20 20"><circle cx="10" cy="9" r="7.5" fill="#5fb86b" stroke="#323130" stroke-width="1.1"/><path d="M4 6c3 0 4 2 6 1s2 4 4 3 2-3 3-3" fill="none" stroke="#fff" stroke-width="1.5"/><path d="M6 19h8M10 17v2" stroke="#323130"/></svg>
<svg style="left:1145px;top:327px" width="20" height="20" viewBox="0 0 20 20"><path d="M2 4l5-2 4 2 6-1 1 6-3 5-5 4-4-1-4-3z" fill="#a19f9d" stroke="#323130" stroke-width="1"/><path d="M11 4l6-1 1 6-3 5-5 4" fill="#77b7f2" stroke="#118dff" stroke-width="1"/></svg>
<svg style="left:1173px;top:327px" width="20" height="20" viewBox="0 0 20 20"><path d="M2 4l5-2 4 2 6-1 1 6-3 5-5 4-4-1-4-3z" fill="#fff" stroke="#323130" stroke-width="1"/><path d="M11 4v6l-3 4M11 10l6-1" fill="none" stroke="#118dff" stroke-width="1"/></svg>
<svg style="left:1201px;top:327px" width="20" height="20" viewBox="0 0 20 20"><path d="M10 1L3 18l7-4 7 4z" fill="#2b88d8"/><path d="M10 1l-7 17 7-4z" fill="#8ac4f5"/></svg>
<svg style="left:1229px;top:327px" width="20" height="20" viewBox="0 0 20 20"><path d="M2 15a8 8 0 0 1 16 0" fill="none" stroke="#118dff" stroke-width="3"/><path d="M10 15l4-5" stroke="#323130" stroke-width="1.5"/><path d="M2 15a8 8 0 0 1 16 0" fill="none" stroke="#323130" stroke-width=".6"/></svg>
<svg style="left:1089px;top:355px" width="20" height="20" viewBox="0 0 20 20"><rect x="1" y="2" width="18" height="15" fill="#fff" stroke="#323130" stroke-width="1"/><text x="3" y="14" font-size="8" font-family="Liberation Sans" fill="#118dff">123</text><path d="M3 5h12" stroke="#323130" stroke-width=".5"/></svg>
<svg style="left:1117px;top:355px" width="20" height="20" viewBox="0 0 20 20"><rect x="1" y="1" width="18" height="18" fill="#fff" stroke="#323130" stroke-width="1"/><path d="M4 4v12" stroke="#323130" stroke-width="1.2"/><path d="M6 5h9M6 9h7M6 13h9" stroke="#118dff" stroke-width="1.5"/></svg>
<svg style="left:1145px;top:355px" width="20" height="20" viewBox="0 0 20 20"><rect x="1" y="2" width="18" height="15" fill="#fff" stroke="#323130" stroke-width="1"/><path d="M3 11l3-5 3 5z" fill="#3fb063"/><path d="M11 6h6l-3 5z" fill="#d64550"/><path d="M3 14h14" stroke="#323130" stroke-width=".8"/></svg>
<svg style="left:1173px;top:355px" width="20" height="20" viewBox="0 0 20 20"><rect x="1" y="1" width="18" height="18" fill="#fff" stroke="#323130" stroke-width="1"/><path d="M1 5h18" stroke="#323130"/><rect x="4" y="8" width="3" height="3" fill="none" stroke="#a19f9d"/><rect x="4" y="13" width="3" height="3" fill="none" stroke="#a19f9d"/><path d="M10 10h9l-3.5 4v5l-2-1v-4z" fill="#fff" stroke="#323130" stroke-width="1"/></svg>
<svg style="left:1201px;top:355px" width="20" height="20" viewBox="0 0 20 20"><rect x="1" y="1" width="18" height="18" fill="#fff" stroke="#323130" stroke-width="1"/><path d="M1 5.5h18M1 10h18M1 14.5h18M7 1v18M13 1v18" stroke="#323130" stroke-width="1"/></svg>
<svg style="left:1229px;top:355px" width="20" height="20" viewBox="0 0 20 20"><rect x="1" y="1" width="18" height="18" fill="#fff" stroke="#323130" stroke-width="1"/><rect x="7" y="6" width="12" height="13" fill="#77b7f2"/><path d="M1 5.5h18M1 10h18M1 14.5h18M7 1v18M13 1v18" stroke="#323130" stroke-width="1"/></svg>
<svg style="left:1089px;top:383px" width="20" height="20" viewBox="0 0 20 20"><text x="3" y="17" font-size="16" font-weight="bold" font-family="Liberation Sans" fill="#2b7cd3">R</text></svg>
<svg style="left:1117px;top:383px" width="20" height="20" viewBox="0 0 20 20"><text x="-1" y="15" font-size="15" font-weight="bold" font-family="Liberation Sans" fill="#2b7cd3">Py</text></svg>
<svg style="left:1145px;top:383px" width="20" height="20" viewBox="0 0 20 20"><path d="M1.5 1v17.5H19" fill="none" stroke="#323130"/><path d="M4 5h10M4 11h8M4 16h4" stroke="#323130" stroke-width=".8"/><circle cx="16" cy="5" r="2" fill="none" stroke="#118dff" stroke-width="1.2"/><rect x="11" y="10" width="2" height="2" fill="none" stroke="#323130"/></svg>
<svg style="left:1173px;top:383px" width="20" height="20" viewBox="0 0 20 20"><rect x="1" y="8" width="6" height="4" fill="#77b7f2" stroke="#118dff"/><rect x="12" y="2" width="6" height="4" fill="#77b7f2" stroke="#118dff"/><rect x="12" y="8" width="6" height="4" fill="#77b7f2" stroke="#118dff"/><rect x="12" y="14" width="6" height="4" fill="#77b7f2" stroke="#118dff"/><path d="M7 10h5M10 4v12h2M10 4h2" fill="none" stroke="#323130"/></svg>
<svg style="left:1201px;top:383px" width="20" height="20" viewBox="0 0 20 20"><path d="M1.5 2.5h17v11H8l-4 4v-4H1.5z" fill="#fff" stroke="#118dff" stroke-width="1.2"/></svg>
<svg style="left:1229px;top:383px" width="20" height="20" viewBox="0 0 20 20"><path d="M2.5 1.5h10l5 5v12h-15z" fill="#fff" stroke="#323130" stroke-width="1"/><path d="M4 8h4M10 10h6M6 13h10" stroke="#118dff" stroke-width="1.2"/><rect x="3" y="6" width="4" height="3" fill="#77b7f2" stroke="#118dff" stroke-width=".6"/></svg>
<svg style="left:1089px;top:411px" width="20" height="20" viewBox="0 0 20 20"><path d="M4 1.5h12v6a6 6 0 0 1-12 0z" fill="#77b7f2" stroke="#323130" stroke-width="1"/><path d="M4 3H1v3a3 3 0 0 0 3 3M16 3h3v3a3 3 0 0 1-3 3M10 13v4M6 18.5h8" fill="none" stroke="#323130" stroke-width="1"/></svg>
<svg style="left:1117px;top:411px" width="20" height="20" viewBox="0 0 20 20"><path d="M2.5 1.5h10l5 5v12h-15z" fill="#fff" stroke="#323130" stroke-width="1.2"/><rect x="5" y="12" width="2" height="5" fill="#323130"/><rect x="8.5" y="9" width="2" height="8" fill="#323130"/><rect x="12" y="13" width="2" height="4" fill="#323130"/></svg>
<svg style="left:1145px;top:411px" width="20" height="20" viewBox="0 0 20 20"><rect x="3" y="5" width="16" height="13" fill="#fff" stroke="#323130" stroke-width="1"/><text x="4" y="15" font-size="7" font-family="Liberation Sans" fill="#118dff">123</text><path d="M4 0h5l-3 5h3L2 12l2-6H1z" fill="#f7a51c" stroke="#c46a10" stroke-width=".5"/></svg>
<svg style="left:1173px;top:411px" width="20" height="20" viewBox="0 0 20 20"><rect x="1" y="3" width="18" height="16" fill="#fff" stroke="#323130" stroke-width="1"/><rect x="4" y="10" width="3" height="3" fill="none" stroke="#a19f9d"/><path d="M10 11h9l-3.5 4v4l-2-1v-3z" fill="#fff" stroke="#323130" stroke-width="1"/><path d="M4 0h5l-3 5h3L2 12l2-6H1z" fill="#f7a51c" stroke="#c46a10" stroke-width=".5"/></svg>
<svg style="left:1201px;top:411px" width="20" height="20" viewBox="0 0 20 20"><rect x="1" y="3" width="17" height="16" fill="#fff" stroke="#118dff" stroke-width="1.5"/><path d="M4 18c2-4 6-3 8-8l6-5" fill="none" stroke="#5fa8e8" stroke-width="2"/><path d="M2 1h4v6l-2 2-2-2z" fill="#e36c2a"/><circle cx="17" cy="17" r="2.5" fill="#e36c2a"/></svg>
<svg style="left:1229px;top:411px" width="20" height="20" viewBox="0 0 20 20"><path d="M10 1l8 9-8 9-8-9z" fill="#fff" stroke="#9b3fbf" stroke-width="1.4"/><path d="M6 5.5l8 9M14 5.5l-8 9" stroke="#9b3fbf" stroke-width="1.2"/></svg>
<svg style="left:1089px;top:439px" width="20" height="20" viewBox="0 0 20 20"><path d="M1 2h8l8 8-8 8H1l8-8z" fill="#fff" stroke="#118dff" stroke-width="1.4"/><path d="M5 2l8 8-8 8" fill="none" stroke="#118dff" stroke-width="1.2"/></svg>
<svg style="left:1117px;top:439px" width="20" height="20" viewBox="0 0 20 20"><circle cx="4" cy="12" r="1" fill="#ca5010"/><circle cx="10" cy="12" r="1" fill="#605e5c"/><circle cx="16" cy="12" r="1" fill="#605e5c"/></svg>
<div class="a" style="left:1087px;top:465px;width:163px;height:0;border-top:1px dashed #c8c6c4"></div>
<div class="a" style="left:1088px;top:473px;width:19px;height:19px;background:#fff"></div>
<svg style="left:1089px;top:474px" width="18" height="17" viewBox="0 0 18 17"><circle cx="3.5" cy="8.5" r="2.2" fill="#fff" stroke="#323130" stroke-width="1.1"/><circle cx="14.5" cy="3" r="2.2" fill="#fff" stroke="#323130" stroke-width="1.1"/><circle cx="14.5" cy="14" r="2.2" fill="#fff" stroke="#323130" stroke-width="1.1"/><path d="M5.5 7.5l7-3.5M5.5 9.5l7 3.5" stroke="#323130" stroke-width="1.1"/></svg>
<div class="a" style="left:1078px;top:499px;width:180px;height:1px;background:#e1dfdd"></div>
<div class="t" style="left:1090px;top:511px;font-size:12px">値</div>
<div class="a" style="left:1082px;top:533px;width:170px;height:28px;background:#fff;border:1px dashed #c8c6c4;border-radius:2px"></div>
<div class="t" style="left:1093px;top:541px;font-size:12px;color:#323130">ここにデータ フィールド...</div>
<div class="t" style="left:1090px;top:573px;font-size:12px;font-weight:bold">ドリルスルー</div>
<div class="t" style="left:1090px;top:597px;font-size:12px">クロス レポート</div>
<div class="a" style="left:1204px;top:597px;width:32px;height:16px;background:#fff;border:1px solid #605e5c;border-radius:8px"></div>
<div class="a" style="left:1208px;top:601px;width:8px;height:8px;background:#605e5c;border-radius:50%"></div>
<div class="t" style="left:1090px;top:625px;font-size:12px">すべてのフィルター</div>
<div class="t" style="left:1090px;top:643px;font-size:12px">を保持する</div>
<div class="a" style="left:1204px;top:624px;width:32px;height:16px;background:#117865;border-radius:8px"></div>
<svg style="left:1208px;top:627px" width="12" height="10" viewBox="0 0 12 10"><path d="M1.5 5l3 3 5-6" fill="none" stroke="#fff" stroke-width="1.8"/></svg>
<div class="a" style="left:1223px;top:628px;width:8px;height:8px;background:#fff;border-radius:50%"></div>
<div class="a" style="left:1082px;top:670px;width:170px;height:28px;background:#fff;border:1px dashed #c8c6c4;border-radius:2px"></div>
<div class="t" style="left:1091px;top:678px;font-size:12px;color:#323130">ドリルスルー フィールド...</div>


<!-- ================= DATA PANE ================= -->
<div class="a" style="left:1259px;top:127px;width:178px;height:666px;background:#f3f2f1"></div>
<div class="t" style="left:1266px;top:136px;font-size:15px;font-weight:bold">データ</div>
<svg style="left:1418px;top:141px" width="13" height="12" viewBox="0 0 13 12"><path d="M1 1l5 5-5 5M7 1l5 5-5 5" fill="none" stroke="#252423" stroke-width="1.2"/></svg>
<div class="a" style="left:1264px;top:175px;width:170px;height:23px;background:#fff;border:1px solid #c8c6c4;border-bottom:1px solid #8a8886;border-radius:3px"></div>
<svg style="left:1275px;top:179px" width="15" height="15" viewBox="0 0 15 15"><circle cx="6" cy="6" r="5" fill="none" stroke="#605e5c" stroke-width="1.2"/><path d="M9.5 9.5L14 14" stroke="#605e5c" stroke-width="1.3"/></svg>
<div class="t" style="left:1297px;top:180px;font-size:12px;color:#605e5c">検索</div>
<div class="a" style="left:1303px;top:215px;width:12px;height:12px;border:1px solid #8a8886;border-radius:2px;background:#fff"></div>
<div class="t" style="left:1341px;top:214px;font-size:12px">国名</div>
<div class="a" style="left:1303px;top:239px;width:12px;height:12px;border:1px solid #8a8886;border-radius:2px;background:#fff"></div>
<svg style="left:1323px;top:239px" width="12" height="13" viewBox="0 0 12 13"><rect x="0.6" y="0.6" width="10.8" height="11.8" rx="1.5" fill="none" stroke="#323130" stroke-width="1.1"/><rect x="2.5" y="2.5" width="7" height="2" fill="#323130"/><g fill="#323130"><rect x="2.5" y="6" width="1.6" height="1.6"/><rect x="5.2" y="6" width="1.6" height="1.6"/><rect x="7.9" y="6" width="1.6" height="1.6"/><rect x="2.5" y="9" width="1.6" height="1.6"/><rect x="5.2" y="9" width="1.6" height="1.6"/><rect x="7.9" y="9" width="1.6" height="1.6"/></g></svg>
<div class="t" style="left:1341px;top:238px;font-size:12px">昨対比_訪日...</div>
<div class="a" style="left:1303px;top:263px;width:12px;height:12px;border:1px solid #8a8886;border-radius:2px;background:#fff"></div>
<svg style="left:1323px;top:263px" width="12" height="13" viewBox="0 0 12 13"><rect x="0.6" y="0.6" width="10.8" height="11.8" rx="1.5" fill="none" stroke="#323130" stroke-width="1.1"/><rect x="2.5" y="2.5" width="7" height="2" fill="#323130"/><g fill="#323130"><rect x="2.5" y="6" width="1.6" height="1.6"/><rect x="5.2" y="6" width="1.6" height="1.6"/><rect x="7.9" y="6" width="1.6" height="1.6"/><rect x="2.5" y="9" width="1.6" height="1.6"/><rect x="5.2" y="9" width="1.6" height="1.6"/><rect x="7.9" y="9" width="1.6" height="1.6"/></g></svg>
<div class="t" style="left:1341px;top:262px;font-size:12px">人口比</div>
<div class="a" style="left:1303px;top:287px;width:12px;height:12px;border:1px solid #8a8886;border-radius:2px;background:#fff"></div>
<svg style="left:1323px;top:287px" width="12" height="13" viewBox="0 0 12 13"><rect x="0.6" y="0.6" width="10.8" height="11.8" rx="1.5" fill="none" stroke="#323130" stroke-width="1.1"/><rect x="2.5" y="2.5" width="7" height="2" fill="#323130"/><g fill="#323130"><rect x="2.5" y="6" width="1.6" height="1.6"/><rect x="5.2" y="6" width="1.6" height="1.6"/><rect x="7.9" y="6" width="1.6" height="1.6"/><rect x="2.5" y="9" width="1.6" height="1.6"/><rect x="5.2" y="9" width="1.6" height="1.6"/><rect x="7.9" y="9" width="1.6" height="1.6"/></g></svg>
<div class="t" style="left:1341px;top:286px;font-size:12px">人口比ランキ...</div>
<div class="a" style="left:1303px;top:311px;width:12px;height:12px;border:1px solid #8a8886;border-radius:2px;background:#fff"></div>
<svg style="left:1323px;top:311px" width="12" height="13" viewBox="0 0 12 13"><path d="M11 1H1l5 5.5L1 12h10" fill="none" stroke="#323130" stroke-width="1.1"/></svg>
<div class="t" style="left:1341px;top:310px;font-size:12px">人数</div>
<div class="a" style="left:1303px;top:335px;width:12px;height:12px;border:1px solid #8a8886;border-radius:2px;background:#fff"></div>
<svg style="left:1323px;top:335px" width="12" height="13" viewBox="0 0 12 13"><path d="M11 1H1l5 5.5L1 12h10" fill="none" stroke="#323130" stroke-width="1.1"/></svg>
<div class="t" style="left:1341px;top:334px;font-size:12px">年</div>
<div class="a" style="left:1303px;top:359px;width:12px;height:12px;border:1px solid #8a8886;border-radius:2px;background:#fff"></div>
<div class="t" style="left:1341px;top:358px;font-size:12px">年月</div>
<svg style="left:1271px;top:385px" width="12" height="8" viewBox="0 0 12 8"><path d="M1 1.5l5 5 5-5" fill="none" stroke="#605e5c" stroke-width="1.1"/></svg>
<svg style="left:1288px;top:383px" width="12" height="12" viewBox="0 0 12 12"><rect x="0.5" y="0.5" width="11" height="11" rx="1.5" fill="none" stroke="#323130"/><path d="M0.5 4.2h11M0.5 7.8h11M4.2 0.5v11M7.8 0.5v11" stroke="#323130" stroke-width="1.1"/></svg>
<div class="t" style="left:1305px;top:382px;font-size:12px">訪日外国人_流動デ...</div>
<div class="a" style="left:1303px;top:407px;width:12px;height:12px;border:1px solid #8a8886;border-radius:2px;background:#fff"></div>
<div class="t" style="left:1341px;top:406px;font-size:12px">交通機関</div>
<div class="a" style="left:1303px;top:431px;width:12px;height:12px;border:1px solid #8a8886;border-radius:2px;background:#fff"></div>
<div class="t" style="left:1341px;top:430px;font-size:12px">国名</div>
<div class="a" style="left:1303px;top:455px;width:12px;height:12px;border:1px solid #8a8886;border-radius:2px;background:#fff"></div>
<div class="t" style="left:1341px;top:454px;font-size:12px">出国港</div>
<div class="a" style="left:1303px;top:479px;width:12px;height:12px;border:1px solid #8a8886;border-radius:2px;background:#fff"></div>
<div class="t" style="left:1341px;top:478px;font-size:12px">出発地</div>
<div class="a" style="left:1303px;top:503px;width:12px;height:12px;border:1px solid #8a8886;border-radius:2px;background:#fff"></div>
<div class="t" style="left:1341px;top:502px;font-size:12px">出発地_種別</div>
<div class="a" style="left:1303px;top:527px;width:12px;height:12px;border:1px solid #8a8886;border-radius:2px;background:#fff"></div>
<div class="t" style="left:1341px;top:526px;font-size:12px">性別</div>
<div class="a" style="left:1303px;top:551px;width:12px;height:12px;border:1px solid #8a8886;border-radius:2px;background:#fff"></div>
<div class="t" style="left:1341px;top:550px;font-size:12px">年</div>
<div class="a" style="left:1303px;top:575px;width:12px;height:12px;border:1px solid #8a8886;border-radius:2px;background:#fff"></div>
<div class="t" style="left:1341px;top:574px;font-size:12px">年代</div>
<div class="a" style="left:1303px;top:599px;width:12px;height:12px;border:1px solid #8a8886;border-radius:2px;background:#fff"></div>
<svg style="left:1323px;top:599px" width="12" height="13" viewBox="0 0 12 13"><path d="M11 1H1l5 5.5L1 12h10" fill="none" stroke="#323130" stroke-width="1.1"/></svg>
<div class="t" style="left:1341px;top:598px;font-size:12px">訪日外国人流...</div>
<div class="a" style="left:1303px;top:623px;width:12px;height:12px;border:1px solid #8a8886;border-radius:2px;background:#fff"></div>
<svg style="left:1323px;top:623px" width="12" height="13" viewBox="0 0 12 13"><path d="M11 1H1l5 5.5L1 12h10" fill="none" stroke="#323130" stroke-width="1.1"/></svg>
<div class="t" style="left:1341px;top:622px;font-size:12px">訪日外国人流...</div>
<div class="a" style="left:1303px;top:647px;width:12px;height:12px;border:1px solid #8a8886;border-radius:2px;background:#fff"></div>
<svg style="left:1323px;top:647px" width="12" height="13" viewBox="0 0 12 13"><path d="M11 1H1l5 5.5L1 12h10" fill="none" stroke="#323130" stroke-width="1.1"/></svg>
<div class="t" style="left:1341px;top:646px;font-size:12px">訪日外国人流...</div>
<div class="a" style="left:1303px;top:671px;width:12px;height:12px;border:1px solid #8a8886;border-radius:2px;background:#fff"></div>
<svg style="left:1323px;top:671px" width="12" height="13" viewBox="0 0 12 13"><path d="M11 1H1l5 5.5L1 12h10" fill="none" stroke="#323130" stroke-width="1.1"/></svg>
<div class="t" style="left:1341px;top:670px;font-size:12px">訪日外国人流...</div>
<div class="a" style="left:1303px;top:695px;width:12px;height:12px;border:1px solid #8a8886;border-radius:2px;background:#fff"></div>
<svg style="left:1323px;top:695px" width="12" height="13" viewBox="0 0 12 13"><path d="M11 1H1l5 5.5L1 12h10" fill="none" stroke="#323130" stroke-width="1.1"/></svg>
<div class="t" style="left:1341px;top:694px;font-size:12px">訪日外国人流...</div>
<div class="a" style="left:1303px;top:719px;width:12px;height:12px;border:1px solid #8a8886;border-radius:2px;background:#fff"></div>
<div class="t" style="left:1341px;top:718px;font-size:12px">目的地</div>
<div class="a" style="left:1303px;top:743px;width:12px;height:12px;border:1px solid #8a8886;border-radius:2px;background:#fff"></div>
<div class="t" style="left:1341px;top:742px;font-size:12px">目的地_種別</div>
<div class="a" style="left:1303px;top:767px;width:12px;height:12px;border:1px solid #8a8886;border-radius:2px;background:#fff"></div>
<div class="t" style="left:1341px;top:766px;font-size:12px">旅行目的</div>
<div class="a" style="left:1427px;top:418px;width:7px;height:366px;background:#c8c6c4"></div>

<!-- ================= PAGE TABS ================= -->
<div class="a" style="left:40px;top:758px;width:128px;height:35px;background:#f3f2f1;border-right:1px solid #8a8886"></div>
<div class="a" style="left:168px;top:758px;width:870px;height:35px;background:#fff"></div>
<svg style="left:51px;top:764px" width="22" height="17" viewBox="0 0 22 17"><rect x="1.5" y="1.5" width="19" height="11" fill="#fff" stroke="#323130" stroke-width="1.2"/><path d="M11 12.5v3M7 15.5h8" stroke="#323130" stroke-width="1.2"/></svg>
<div class="a" style="left:50px;top:786px;width:24px;height:3px;background:#117865;border-radius:2px"></div>
<svg style="left:99px;top:762px" width="14" height="22" viewBox="0 0 14 22"><rect x="1.5" y="1.5" width="11" height="19" rx="1.5" fill="none" stroke="#323130" stroke-width="1.2"/><rect x="6" y="17" width="2" height="1.2" fill="#323130"/></svg>
<svg style="left:133px;top:772px" width="6" height="9" viewBox="0 0 6 9"><path d="M5.5 0.5v8L0.5 4.5z" fill="#252423"/></svg>
<svg style="left:155px;top:772px" width="6" height="9" viewBox="0 0 6 9"><path d="M0.5 0.5v8l5-4z" fill="#c8c6c4"/></svg>
<div class="a" style="left:175px;top:758px;width:1px;height:35px;background:#d2d0ce"></div>
<div class="t" style="left:195px;top:770px;font-size:12px">コロナ前後の訪日外客数伸び率②</div>
<div class="a" style="left:396px;top:758px;width:1px;height:35px;background:#d2d0ce"></div>
<div class="t" style="left:417px;top:770px;font-size:12px">訪日外客人_流動（入国港)人数確認</div>
<div class="a" style="left:626px;top:758px;width:1px;height:35px;background:#d2d0ce"></div>
<div class="t" style="left:647px;top:770px;font-size:12px">訪日外客人_流動（入国港⇒目的地)</div>
<div class="a" style="left:627px;top:789px;width:229px;height:4px;background:#117865"></div>
<div class="a" style="left:856px;top:758px;width:1px;height:35px;background:#d2d0ce"></div>
<div class="t" style="left:877px;top:770px;font-size:12px">訪日外客人_流動（目的地)</div>
<div class="a" style="left:1038px;top:758px;width:39px;height:35px;background:#117865"></div>
<svg style="left:1051px;top:768px" width="13" height="13" viewBox="0 0 13 13"><path d="M6.5 1v11M1 6.5h11" stroke="#fff" stroke-width="3"/></svg>

<div class="a" style="left:0;top:126px;width:1437px;height:6px;background:linear-gradient(rgba(0,0,0,0.09),rgba(0,0,0,0))"></div>

</body></html>
